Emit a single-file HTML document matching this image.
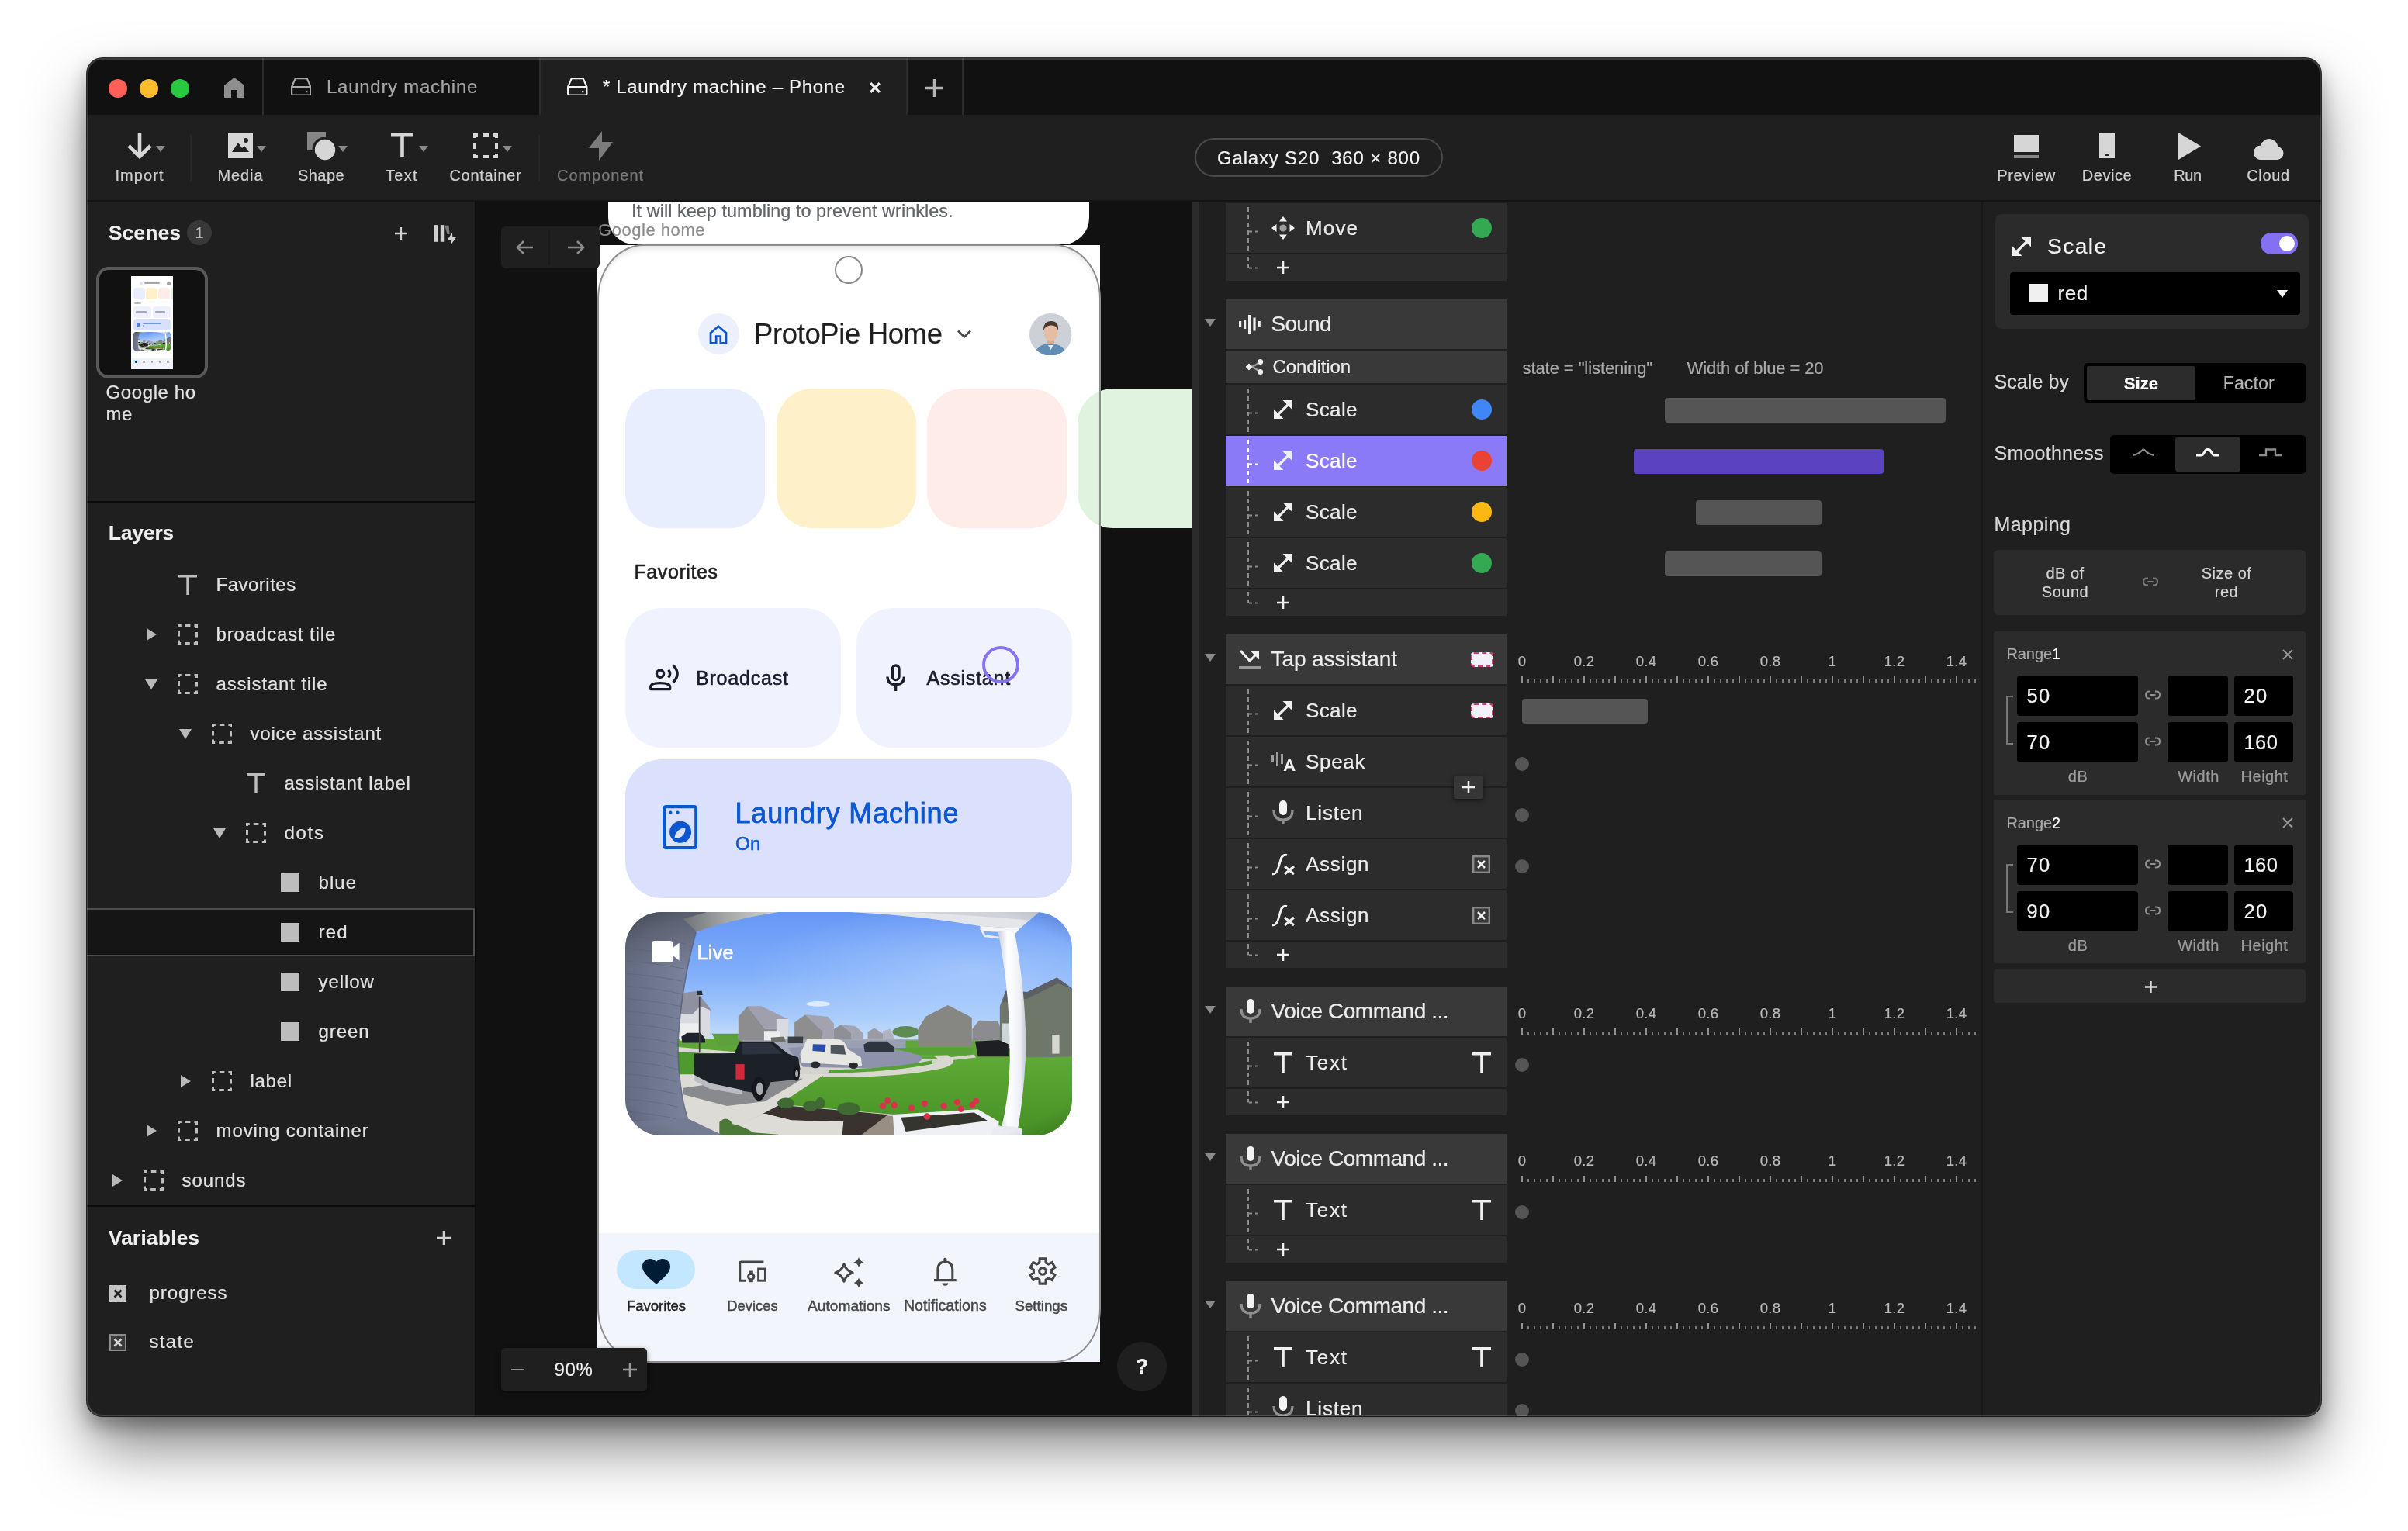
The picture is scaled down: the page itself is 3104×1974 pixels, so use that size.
<!DOCTYPE html>
<html lang="en"><head><meta charset="utf-8"><title>ProtoPie - Laundry machine - Phone</title>
<style>
html,body{margin:0;padding:0;}
body{width:3104px;height:1974px;background:#ffffff;overflow:hidden;position:relative;font-family:"Liberation Sans",sans-serif;}
#win{position:absolute;left:112px;top:75px;width:2880px;height:1751px;border-radius:20px;overflow:hidden;background:#1f1f1f;
box-shadow:0 0 0 1px rgba(0,0,0,.8),0 42px 80px -4px rgba(0,0,0,.5),0 12px 24px rgba(0,0,0,.32);}
#in{position:absolute;left:-112px;top:-75px;width:3104px;height:1974px;will-change:transform;}
#in div,#in svg{position:absolute;box-sizing:border-box;}
#in div{-webkit-text-stroke:0.22px currentColor;}
#edge{position:absolute;left:112px;top:75px;width:2880px;height:1751px;border-radius:20px;box-shadow:inset 0 0 0 2px rgba(255,255,255,.17);pointer-events:none;}
</style></head><body>
<div id="win"><div id="in">
<!-- s1_chrome -->
<div style="left:112px;top:75px;width:2880px;height:73px;background:#111111;"></div>
<div style="left:338px;top:75px;width:2px;height:73px;background:#2b2b2b;"></div>
<div style="left:695px;top:75px;width:2px;height:73px;background:#2b2b2b;"></div>
<div style="left:1168px;top:75px;width:2px;height:73px;background:#2b2b2b;"></div>
<div style="left:1240px;top:75px;width:2px;height:73px;background:#2b2b2b;"></div>
<div style="left:697px;top:75px;width:471px;height:73px;background:#1f1f1f;"></div>
<div style="left:1170px;top:75px;width:70px;height:73px;background:#141414;"></div>
<div style="left:140px;top:102px;width:24px;height:24px;background:#fe5f57;border-radius:50%;"></div>
<div style="left:180px;top:102px;width:24px;height:24px;background:#febc2e;border-radius:50%;"></div>
<div style="left:220px;top:102px;width:24px;height:24px;background:#28c840;border-radius:50%;"></div>
<svg style="left:288px;top:99px;" width="28" height="28" viewBox="0 0 28 28"><path d="M14 1 L27 11 V27 H18 V17 H10 V27 H1 V11 Z" fill="#8e8e8e"/></svg>
<svg style="left:374.9px;top:99.9px;" width="26.5" height="23.6" viewBox="0 0 26.5 23.6"><path d="M5.8 1.1 H20.7 L25.4 12 V20.5 Q25.4 22.5 23.4 22.5 H3.1 Q1.1 22.5 1.1 20.5 V12 Z M1.1 12 H25.4" fill="none" stroke="#a8a8a8" stroke-width="2.2" stroke-linejoin="round"/><rect x="19.2" y="17" width="2.2" height="2.2" fill="#a8a8a8"/></svg>
<div style="top:93px;height:38px;line-height:38px;font-size:24px;color:#a6a6a6;white-space:nowrap;letter-spacing:0.73px;left:421px;">Laundry machine</div>
<svg style="left:731px;top:99.9px;" width="26.5" height="23.6" viewBox="0 0 26.5 23.6"><path d="M5.8 1.1 H20.7 L25.4 12 V20.5 Q25.4 22.5 23.4 22.5 H3.1 Q1.1 22.5 1.1 20.5 V12 Z M1.1 12 H25.4" fill="none" stroke="#f2f2f2" stroke-width="2.2" stroke-linejoin="round"/><rect x="19.2" y="17" width="2.2" height="2.2" fill="#f2f2f2"/></svg>
<div style="top:93px;height:38px;line-height:38px;font-size:24px;color:#f4f4f4;white-space:nowrap;letter-spacing:0.66px;left:777px;">* Laundry machine – Phone</div>
<svg style="left:1120.5px;top:105.5px;" width="14" height="14" viewBox="0 0 14 14"><path d="M1.2 1.2 L12.8 12.8 M12.8 1.2 L1.2 12.8" stroke="#f0f0f0" stroke-width="3.1" fill="none"/></svg>
<svg style="left:1192px;top:101px;" width="25" height="25" viewBox="0 0 25 25"><path d="M12.5 1 V24 M1 12.5 H24" stroke="#b4b4b4" stroke-width="3.4" fill="none"/></svg>
<div style="left:112px;top:148px;width:2880px;height:110px;background:#1f1f1f;"></div>
<div style="left:112px;top:258px;width:2880px;height:2px;background:#141414;"></div>
<div style="left:245px;top:174px;width:2px;height:60px;background:#272727;"></div>
<div style="left:694px;top:174px;width:2px;height:60px;background:#272727;"></div>
<svg style="left:163px;top:170px;" width="34" height="36" viewBox="0 0 34 36"><path d="M17 2 V31 M3 18 L17 32 L31 18" stroke="#d6d6d6" stroke-width="4.6" fill="none"/></svg>
<svg style="left:201px;top:188px;" width="12" height="8" viewBox="0 0 12 8"><path d="M0 0 H12 L6 8 Z" fill="#8a8a8a"/></svg>
<div style="top:210px;height:32px;line-height:32px;font-size:20px;color:#cfcfcf;white-space:nowrap;letter-spacing:1.06px;left:-220px;width:800px;text-align:center;">Import</div>
<svg style="left:294px;top:172px;" width="32" height="32" viewBox="0 0 32 32"><rect width="32" height="32" fill="#d6d6d6"/><path d="M5 24 L13 12 L18 19 L21 16 L27 24 Z" fill="#1f1f1f"/><circle cx="23" cy="9" r="3" fill="#1f1f1f"/></svg>
<svg style="left:331px;top:188px;" width="12" height="8" viewBox="0 0 12 8"><path d="M0 0 H12 L6 8 Z" fill="#8a8a8a"/></svg>
<div style="top:210px;height:32px;line-height:32px;font-size:20px;color:#cfcfcf;white-space:nowrap;letter-spacing:0.88px;left:-90px;width:800px;text-align:center;">Media</div>
<svg style="left:396px;top:170px;" width="40" height="40" viewBox="0 0 40 40"><rect width="24" height="24" fill="#858585"/><circle cx="23" cy="23" r="16.5" fill="#1f1f1f"/><circle cx="23" cy="23" r="13.2" fill="#d6d6d6"/></svg>
<svg style="left:435.5px;top:188px;" width="12" height="8" viewBox="0 0 12 8"><path d="M0 0 H12 L6 8 Z" fill="#8a8a8a"/></svg>
<div style="top:210px;height:32px;line-height:32px;font-size:20px;color:#cfcfcf;white-space:nowrap;letter-spacing:0.47px;left:14px;width:800px;text-align:center;">Shape</div>
<svg style="left:504px;top:171px;" width="29" height="31" viewBox="0 0 29 31"><path d="M0 0 H29 V4.6 H16.8 V31 H12.2 V4.6 H0 Z" fill="#d6d6d6"/></svg>
<svg style="left:539.5px;top:188px;" width="12" height="8" viewBox="0 0 12 8"><path d="M0 0 H12 L6 8 Z" fill="#8a8a8a"/></svg>
<div style="top:210px;height:32px;line-height:32px;font-size:20px;color:#cfcfcf;white-space:nowrap;letter-spacing:1.34px;left:118px;width:800px;text-align:center;">Text</div>
<svg style="left:610px;top:172px;" width="32" height="32" viewBox="0 0 32 32"><rect x="2" y="2" width="28" height="28" fill="none" stroke="#d6d6d6" stroke-width="4" stroke-dasharray="8 6" stroke-dashoffset="4"/></svg>
<svg style="left:647.5px;top:188px;" width="12" height="8" viewBox="0 0 12 8"><path d="M0 0 H12 L6 8 Z" fill="#8a8a8a"/></svg>
<div style="top:210px;height:32px;line-height:32px;font-size:20px;color:#cfcfcf;white-space:nowrap;letter-spacing:0.71px;left:226px;width:800px;text-align:center;">Container</div>
<svg style="left:757px;top:169px;" width="34" height="38" viewBox="0 0 34 38"><path d="M19 0 L2 22 H15 L15 38 L33 14 H19 Z" fill="#7c7c7c"/></svg>
<div style="top:210px;height:32px;line-height:32px;font-size:20px;color:#7a7a7a;white-space:nowrap;letter-spacing:0.95px;left:374px;width:800px;text-align:center;">Component</div>
<div style="left:1540px;top:178px;width:320px;height:50px;border:2px solid #4a4a4a;border-radius:26px;box-sizing:border-box;"></div>
<div style="top:184.5px;height:38px;line-height:38px;font-size:24px;color:#f2f2f2;white-space:nowrap;letter-spacing:0.81px;left:1300px;width:800px;text-align:center;">Galaxy S20  360 × 800</div>
<svg style="left:2596px;top:174px;" width="32" height="30" viewBox="0 0 32 30"><rect width="32" height="22" fill="#d6d6d6"/><rect y="26" width="32" height="4" fill="#858585"/></svg>
<div style="top:210px;height:32px;line-height:32px;font-size:20px;color:#cfcfcf;white-space:nowrap;letter-spacing:0.64px;left:2212px;width:800px;text-align:center;">Preview</div>
<svg style="left:2706px;top:172px;" width="20" height="32" viewBox="0 0 20 32"><rect width="20" height="32" fill="#d6d6d6"/><rect x="7" y="26" width="6" height="3" fill="#1f1f1f"/></svg>
<div style="top:210px;height:32px;line-height:32px;font-size:20px;color:#cfcfcf;white-space:nowrap;letter-spacing:0.57px;left:2316px;width:800px;text-align:center;">Device</div>
<svg style="left:2808px;top:170.5px;" width="29" height="35" viewBox="0 0 29 35"><path d="M0 0 L29 17.5 L0 35 Z" fill="#d6d6d6"/></svg>
<div style="top:210px;height:32px;line-height:32px;font-size:20px;color:#cfcfcf;white-space:nowrap;letter-spacing:-0.35px;left:2420px;width:800px;text-align:center;">Run</div>
<svg style="left:2903px;top:177px;" width="42" height="30" viewBox="0 0 42 30"><path d="M10 29 H33 A8.5 8.5 0 0 0 33.5 12.2 A11.5 11.5 0 0 0 11 10.5 A9.3 9.3 0 0 0 10 29 Z" fill="#d6d6d6"/></svg>
<div style="top:210px;height:32px;line-height:32px;font-size:20px;color:#cfcfcf;white-space:nowrap;letter-spacing:0.69px;left:2524px;width:800px;text-align:center;">Cloud</div>
<!-- s2_left -->
<div style="left:112px;top:260px;width:500px;height:1566px;background:#1f1f1f;"></div>
<div style="left:612px;top:260px;width:2px;height:1566px;background:#0c0c0c;"></div>
<div style="top:279.5px;height:41px;line-height:41px;font-size:26px;color:#f0f0f0;white-space:nowrap;font-weight:700;letter-spacing:0.39px;left:140px;">Scenes</div>
<div style="left:241px;top:284px;width:32px;height:32px;background:#383838;border-radius:50%;"></div>
<div style="top:284px;height:32px;line-height:32px;font-size:20px;color:#b5b5b5;white-space:nowrap;left:-143px;width:800px;text-align:center;">1</div>
<svg style="left:509px;top:293px;" width="16" height="16" viewBox="0 0 16 16"><path d="M8 0 V16 M0 8 H16" stroke="#d0d0d0" stroke-width="2.3" fill="none"/></svg>
<svg style="left:559px;top:289px;" width="30" height="28" viewBox="0 0 30 28"><rect x="0.8" y="1.1" width="4.3" height="21.7" fill="#cfcfcf"/><rect x="8.8" y="1.1" width="4.4" height="21.7" fill="#cfcfcf"/><path d="M14.4 1.8 L19.5 1.8 L20.6 12.9 L17.4 12.9 Z" fill="#7a7a7a"/><path d="M23.9 11.2 L17.4 20.4 L22.2 20.4 L22.3 26.6 L29 16.9 L24.4 16.9 Z" fill="#cfcfcf"/></svg>
<div style="left:124px;top:344px;width:144px;height:144px;background:#111111;border:4px solid #595959;border-radius:16px;"></div>
<div style="left:168.9px;top:355.8px;width:54.2px;height:120.44px;background:#ffffff;border-radius:0px;"></div>
<div style="left:179.69px;top:363.16px;width:4.43px;height:4.43px;background:#dfe6fa;border-radius:3px;"></div>
<div style="left:186.05px;top:364.33px;width:19.82px;height:2.17px;background:#8f9094;border-radius:1px;opacity:.8;"></div>
<div style="left:215.49px;top:363.16px;width:4.52px;height:4.52px;background:#9aa3ae;border-radius:3px;"></div>
<div style="left:171.91px;top:371.27px;width:15.06px;height:15.06px;background:#e8eefd;border-radius:4px;"></div>
<div style="left:188.14px;top:371.27px;width:15.06px;height:15.06px;background:#fef0c8;border-radius:4px;"></div>
<div style="left:204.36px;top:371.27px;width:15.06px;height:15.06px;background:#feece8;border-radius:4px;"></div>
<div style="left:220.67px;top:371.27px;width:2.43px;height:15.06px;background:#e0f3de;border-radius:0px;"></div>
<div style="left:172.91px;top:390.26px;width:8.7px;height:1.51px;background:#b9babd;border-radius:1px;"></div>
<div style="left:171.91px;top:394.94px;width:23.25px;height:15.06px;background:#eef1fd;border-radius:4px;"></div>
<div style="left:196.84px;top:394.94px;width:23.17px;height:15.06px;background:#eef1fd;border-radius:4px;"></div>
<div style="left:174.59px;top:401.3px;width:14.55px;height:2.34px;background:#8e909c;border-radius:1px;opacity:.75;"></div>
<div style="left:200.1px;top:401.3px;width:13.13px;height:2.34px;background:#8e909c;border-radius:1px;opacity:.75;"></div>
<div style="left:171.91px;top:411.25px;width:48.09px;height:14.89px;background:#d9e0fc;border-radius:4px;"></div>
<div style="left:175.93px;top:416.19px;width:3.76px;height:4.77px;background:#4d7fd8;border-radius:1px;"></div>
<div style="left:183.79px;top:415.85px;width:23.92px;height:2.34px;background:#6f97e0;border-radius:1px;"></div>
<div style="left:183.79px;top:419.37px;width:2.68px;height:1.67px;background:#7fa2e4;border-radius:1px;"></div>
<svg style="left:171.91px;top:427.73px;" width="48.18" height="24.09" viewBox="25 25 2350 1175" preserveAspectRatio="none"><defs><linearGradient id="tsky" x1="0" y1="0" x2="0" y2="1"><stop offset="0" stop-color="#6697f6"/><stop offset="0.45" stop-color="#80aefa"/><stop offset="0.8" stop-color="#a9ccfb"/><stop offset="1" stop-color="#d2e3fa"/></linearGradient><radialGradient id="tglow" cx="0.78" cy="0.45" r="0.5"><stop offset="0" stop-color="#d9ecff" stop-opacity="0.38"/><stop offset="1" stop-color="#d9ecff" stop-opacity="0"/></radialGradient><linearGradient id="tlawn" x1="0" y1="0" x2="0" y2="1"><stop offset="0" stop-color="#5faa36"/><stop offset="1" stop-color="#468f25"/></linearGradient><linearGradient id="tside" x1="0" y1="0" x2="1" y2="0"><stop offset="0" stop-color="#646c82"/><stop offset="0.55" stop-color="#79819a"/><stop offset="1" stop-color="#80889f"/></linearGradient><linearGradient id="tpil" x1="0" y1="0" x2="1" y2="0"><stop offset="0" stop-color="#c9ced9"/><stop offset="0.35" stop-color="#ffffff"/><stop offset="0.8" stop-color="#eef0f5"/><stop offset="1" stop-color="#c4c9d4"/></linearGradient><radialGradient id="tvig" cx="0.5" cy="0.5" r="0.75"><stop offset="0.8" stop-color="#000" stop-opacity="0"/><stop offset="1" stop-color="#000" stop-opacity="0.22"/></radialGradient><clipPath id="tcamclip"><rect x="25" y="25" width="2350" height="1175" rx="190" ry="190"/></clipPath></defs><g clip-path="url(#tcamclip)"><rect x="25" y="25" width="2350" height="700" fill="url(#tsky)"/><rect x="25" y="25" width="2350" height="700" fill="url(#tglow)"/><ellipse cx="1040" cy="508" rx="62" ry="14" fill="#e8f1fd" opacity="0.85"/><rect x="25" y="690" width="2350" height="520" fill="#d4d4cf"/><path d="M300 690 H2375 V800 H300 Z" fill="#a4a9b9"/><path d="M1440 700 H2375 V800 H1440 Z" fill="#5fa53a"/><path d="M300 690 H640 V800 H300 Z" fill="#5fa53a"/><ellipse cx="1500" cy="655" rx="70" ry="30" fill="#5f8a52"/><path d="M880 740 Q1250 700 1560 770 Q1620 800 1540 825 Q1380 850 1240 845 L960 840 Z" fill="#8e93ab"/><path d="M1100 700 H1500 V740 H1100 Z" fill="#9aa0b4"/><path d="M310 470 L390 440 L470 540 L470 690 L310 700 Z" fill="#d9dbe0"/><path d="M300 455 L400 440 L480 545 L420 520 L380 560 L300 560 Z" fill="#8f91a0"/><path d="M310 610 H410 V700 H310 Z" fill="#eeeeee"/><path d="M620 575 L668 520 L760 640 L840 640 V700 H620 Z" fill="#8d8d8f"/><path d="M668 520 L740 520 L885 590 L885 680 L840 690 V640 L760 640 Z" fill="#a09fae"/><path d="M820 588 H885 V690 H820 Z" fill="#d8dbe2"/><path d="M755 650 H838 V700 H755 Z" fill="#eceef0"/><path d="M915 605 L972 565 L1060 650 V695 H915 Z" fill="#8e8e8f"/><path d="M972 565 L1090 575 L1122 610 V690 H1060 V650 Z" fill="#a3a2ae"/><path d="M1122 640 L1160 618 L1215 660 V695 H1122 Z" fill="#8f9096"/><path d="M1160 618 L1235 625 L1275 660 V690 H1215 V660 Z" fill="#a3a4b2"/><path d="M1300 655 L1335 635 L1380 665 V695 H1300 Z" fill="#9a9ba3"/><path d="M1380 650 L1420 640 L1440 690 H1380 Z" fill="#b0b2bf"/><path d="M1565 640 L1605 575 L1722 515 L1848 580 V735 H1565 Z" fill="#868682"/><path d="M1850 640 L1885 595 L1985 598 L2000 640 V700 H1850 Z" fill="#8b8b90"/><path d="M1995 520 L2025 440 L2140 445 L2295 370 L2380 430 V790 H2140 L1995 740 Z" fill="#6f766a"/><path d="M2025 440 L2140 445 L2295 370 L2380 430 L2300 400 L2140 480 L2010 500 Z" fill="#5c5f66"/><path d="M2005 610 H2050 V740 H2005 Z" fill="#cfd6d8"/><rect x="2270" y="670" width="38" height="100" fill="#d7d7d2"/><path d="M1060 885 L1640 850 Q1730 830 1730 800 L2380 785 V1210 H2150 L1960 1135 L1440 1090 L830 1035 Z" fill="url(#tlawn)"/><path d="M1440 740 H1860 L1840 775 H1560 Z" fill="#58a038"/><path d="M1100 855 Q1400 850 1640 805 L1640 825 Q1400 870 1090 872 Z" fill="#57a035"/><path d="M300 760 L600 775 L395 880 H300 Z" fill="#4f9a2e"/><path d="M480 665 H620 V720 L520 735 Z" fill="#5da03c"/><path d="M1075 878 Q1420 872 1640 825 Q1700 805 1640 780 L1720 778 Q1790 815 1700 845 Q1450 900 1060 892 Z" fill="#d9d8cf"/><path d="M1720 790 L1860 775 L1870 790 L1735 805 Z" fill="#d6d5cd"/><path d="M300 735 L600 760 L600 775 L300 760 Z" fill="#d8d7d0"/><path d="M310 880 L1075 878 L830 1040 L640 1140 L1170 1125 L1165 1210 H560 L350 1110 Z" fill="#dcdbd6"/><path d="M330 950 L470 930 L960 900 L760 1020 L560 1045 L330 985 Z" fill="#6d6f74" opacity="0.75"/><path d="M320 680 L350 660 L420 660 L445 690 V712 H325 Z" fill="#1f232c"/><path d="M1278 722 L1310 705 L1400 705 L1438 735 V762 H1285 Z" fill="#2f3540"/><path d="M1865 705 L1990 698 L2040 720 V785 H1880 Z" fill="#1d1f22"/><path d="M880 680 H960 V715 H880 Z" fill="#3a3d42"/><path d="M790 685 L860 680 L870 710 H795 Z" fill="#6d7068"/><path d="M978 700 Q980 690 995 690 L1150 695 Q1180 700 1195 745 L1265 790 L1270 835 L950 815 L945 770 Z" fill="#e6e6e2"/><path d="M1012 720 L1080 722 L1075 760 L1010 755 Z" fill="#2b4fa8"/><path d="M1105 725 L1175 728 L1185 775 L1105 770 Z" fill="#50545c"/><ellipse cx="1025" cy="828" rx="26" ry="18" fill="#2a2a2c"/><ellipse cx="1225" cy="832" rx="24" ry="17" fill="#2a2a2c"/><path d="M388 770 L600 768 L625 705 L800 705 L880 770 L935 790 L945 850 L930 905 L790 920 L760 985 L640 965 L470 940 L385 895 Z" fill="#1c2027"/><path d="M640 715 L790 715 L850 770 L640 775 Z" fill="#2c3340"/><path d="M606 825 H652 V905 H606 Z" fill="#d3273a"/><path d="M385 880 L470 925 L640 960 L640 985 L470 955 L385 910 Z" fill="#b9bcc0"/><ellipse cx="728" cy="955" rx="36" ry="62" fill="#15171b"/><ellipse cx="732" cy="955" rx="18" ry="34" fill="#a8abb0"/><ellipse cx="925" cy="875" rx="18" ry="38" fill="#15171b"/><ellipse cx="927" cy="875" rx="8" ry="19" fill="#a8abb0"/><rect x="412" y="470" width="7" height="295" fill="#3a3d40"/><path d="M405 440 L428 440 L432 462 L400 462 Z" fill="#2c2e31"/><path d="M750 1085 L835 1040 L1400 1090 L1430 1135 L1250 1210 H1160 L1172 1128 L900 1120 Z" fill="#3a322f"/><path d="M1250 1210 L1400 1095 L1440 1100 L1440 1210 Z" fill="#988f82"/><path d="M640 1140 L760 1085 L900 1120 L1172 1128 L1165 1210 H640 Z" fill="#dedcd6"/><path d="M520 1130 Q560 1090 590 1140 Q640 1150 700 1185 L830 1195 V1210 H520 Z" fill="#4a7a35"/><ellipse cx="870" cy="1030" rx="45" ry="28" fill="#3f6a33"/><ellipse cx="1000" cy="1045" rx="40" ry="28" fill="#3f6a33"/><ellipse cx="1200" cy="1060" rx="60" ry="34" fill="#3f6a33"/><ellipse cx="1050" cy="1030" rx="25" ry="30" fill="#3f6a33"/><path d="M1432 1090 L1880 1062 L1990 1128 L1985 1210 H1440 Z" fill="#eef0f3"/><path d="M1475 1105 L1860 1080 L1930 1122 L1500 1180 Z" fill="#35352f"/><circle cx="1405" cy="1018" r="17" fill="#d8334d"/><circle cx="1440" cy="1040" r="17" fill="#d8334d"/><circle cx="1530" cy="1055" r="17" fill="#d8334d"/><circle cx="1600" cy="1032" r="17" fill="#d8334d"/><circle cx="1612" cy="1100" r="17" fill="#d8334d"/><circle cx="1700" cy="1045" r="17" fill="#d8334d"/><circle cx="1770" cy="1025" r="17" fill="#d8334d"/><circle cx="1850" cy="1040" r="17" fill="#d8334d"/><circle cx="1870" cy="1020" r="17" fill="#d8334d"/><circle cx="1790" cy="1060" r="17" fill="#d8334d"/><circle cx="1380" cy="1045" r="17" fill="#d8334d"/><path d="M25 25 H450 L395 130 Q320 400 300 700 Q300 950 350 1110 L560 1210 H25 Z" fill="url(#tside)"/><linearGradient id="tsidetop" x1="0" y1="0" x2="0" y2="1"><stop offset="0" stop-color="#4e525c" stop-opacity="0.75"/><stop offset="1" stop-color="#4e525c" stop-opacity="0"/></linearGradient><path d="M25 25 H450 L395 130 Q360 250 345 330 H25 Z" fill="url(#tsidetop)"/><path d="M25 150 Q200 164 345 192" stroke="#59617a" stroke-width="4" fill="none" opacity="0.6"/><path d="M25 216 Q200 230 340 258" stroke="#59617a" stroke-width="4" fill="none" opacity="0.6"/><path d="M25 282 Q200 296 335 324" stroke="#59617a" stroke-width="4" fill="none" opacity="0.6"/><path d="M25 348 Q200 362 330 390" stroke="#59617a" stroke-width="4" fill="none" opacity="0.6"/><path d="M25 414 Q200 428 325 456" stroke="#59617a" stroke-width="4" fill="none" opacity="0.6"/><path d="M25 480 Q200 494 320 522" stroke="#59617a" stroke-width="4" fill="none" opacity="0.6"/><path d="M25 546 Q200 560 315 588" stroke="#59617a" stroke-width="4" fill="none" opacity="0.6"/><path d="M25 612 Q200 626 310 654" stroke="#59617a" stroke-width="4" fill="none" opacity="0.6"/><path d="M25 678 Q200 692 305 720" stroke="#59617a" stroke-width="4" fill="none" opacity="0.6"/><path d="M25 744 Q200 758 300 786" stroke="#59617a" stroke-width="4" fill="none" opacity="0.6"/><path d="M25 810 Q200 824 300 852" stroke="#59617a" stroke-width="4" fill="none" opacity="0.6"/><path d="M25 876 Q200 890 300 918" stroke="#59617a" stroke-width="4" fill="none" opacity="0.6"/><path d="M25 942 Q200 956 300 984" stroke="#59617a" stroke-width="4" fill="none" opacity="0.6"/><path d="M25 1008 Q200 1022 300 1050" stroke="#59617a" stroke-width="4" fill="none" opacity="0.6"/><path d="M25 1074 Q200 1088 300 1116" stroke="#59617a" stroke-width="4" fill="none" opacity="0.6"/><path d="M25 1140 Q200 1154 300 1182" stroke="#59617a" stroke-width="4" fill="none" opacity="0.6"/><path d="M397 130 Q322 400 302 700 Q302 950 352 1110" stroke="#565d72" stroke-width="7" fill="none" opacity="0.8"/><path d="M350 1110 L560 1210 H25 V1130 Z" fill="#747c93"/><linearGradient id="troofl" x1="0" y1="0" x2="1" y2="0"><stop offset="0" stop-color="#6f7378"/><stop offset="0.45" stop-color="#a4a6a6"/><stop offset="1" stop-color="#d6d6d2"/></linearGradient><path d="M330 62 L455 25 H830 Q600 60 400 128 Z" fill="url(#troofl)"/><path d="M1200 25 H2200 L2100 112 L1890 98 Q1560 42 1200 25 Z" fill="#e3e5e8"/><path d="M1500 25 H2200 L2150 68 Q1850 40 1500 25 Z" fill="#cfd2d8"/><path d="M1890 98 L2100 112 L2080 135 L1900 125 Z" fill="#f4f5f7"/><path d="M1895 110 L1915 150 L1990 160" stroke="#e9ebef" stroke-width="12" fill="none"/><path d="M1985 125 L2072 125 Q2140 500 2130 800 Q2120 1000 2085 1195 L1995 1195 Q2045 1000 2048 800 Q2050 450 1985 125 Z" fill="url(#tpil)"/><path d="M1960 1160 Q2040 1140 2110 1165 L2110 1210 H1950 Z" fill="#e9ebf0"/><rect x="25" y="25" width="2350" height="1175" fill="url(#tvig)"/></g></svg>
<div style="left:168.9px;top:462.36px;width:54.2px;height:13.88px;background:#f1f3fb;border-radius:0px;"></div>
<div style="left:171.07px;top:464.2px;width:8.36px;height:4.18px;background:#c2e7ff;border-radius:2px;"></div>
<div style="left:173.92px;top:465.2px;width:2.68px;height:2.51px;background:#0a2440;border-radius:1.5px;"></div>
<div style="left:184.29px;top:465.37px;width:2.68px;height:2.34px;background:#a4a6a8;border-radius:1px;"></div>
<div style="left:194.66px;top:465.37px;width:2.68px;height:2.34px;background:#a4a6a8;border-radius:1px;"></div>
<div style="left:205.03px;top:465.37px;width:2.68px;height:2.34px;background:#a4a6a8;border-radius:1px;"></div>
<div style="left:215.49px;top:465.37px;width:2.68px;height:2.34px;background:#a4a6a8;border-radius:1px;"></div>
<div style="left:172.08px;top:469.64px;width:6.36px;height:1.17px;background:#b4b5b8;border-radius:0.5px;"></div>
<div style="left:182.91px;top:469.64px;width:5.44px;height:1.17px;background:#b4b5b8;border-radius:0.5px;"></div>
<div style="left:191.57px;top:469.64px;width:8.87px;height:1.17px;background:#b4b5b8;border-radius:0.5px;"></div>
<div style="left:201.94px;top:469.64px;width:8.87px;height:1.17px;background:#b4b5b8;border-radius:0.5px;"></div>
<div style="left:213.9px;top:469.64px;width:5.69px;height:1.17px;background:#b4b5b8;border-radius:0.5px;"></div>
<div style="top:487px;height:38px;line-height:38px;font-size:24px;color:#e2e2e2;white-space:nowrap;letter-spacing:0.61px;left:136.5px;">Google ho</div>
<div style="top:514.5px;height:38px;line-height:38px;font-size:24px;color:#e2e2e2;white-space:nowrap;letter-spacing:0.6px;left:136.5px;">me</div>
<div style="left:112px;top:646px;width:500px;height:2px;background:#0a0a0a;"></div>
<div style="top:667px;height:41px;line-height:41px;font-size:26px;color:#f0f0f0;white-space:nowrap;font-weight:700;letter-spacing:0.03px;left:140px;">Layers</div>
<svg style="left:230px;top:740.5px;" width="24" height="26" viewBox="0 0 24 26"><path d="M0 0 H24 V3.4 H13.7 V26 H10.3 V3.4 H0 Z" fill="#bcbcbc"/></svg>
<div style="top:735px;height:38px;line-height:38px;font-size:24px;color:#e2e2e2;white-space:nowrap;letter-spacing:0.5px;left:278.5px;">Favorites</div>
<svg style="left:189px;top:809.5px;" width="13" height="16" viewBox="0 0 13 16"><path d="M0 0 L13 8 L0 16 Z" fill="#b8b8b8"/></svg>
<svg style="left:229px;top:804.5px;" width="26" height="26" viewBox="0 0 26 26"><rect x="1.5" y="1.5" width="23" height="23" fill="none" stroke="#bcbcbc" stroke-width="3" stroke-dasharray="6.6 5" stroke-dashoffset="3.3"/></svg>
<div style="top:799px;height:38px;line-height:38px;font-size:24px;color:#e2e2e2;white-space:nowrap;letter-spacing:0.85px;left:278.5px;">broadcast tile</div>
<svg style="left:187px;top:875.5px;" width="16" height="13" viewBox="0 0 16 13"><path d="M0 0 H16 L8 13 Z" fill="#b8b8b8"/></svg>
<svg style="left:229px;top:868.5px;" width="26" height="26" viewBox="0 0 26 26"><rect x="1.5" y="1.5" width="23" height="23" fill="none" stroke="#bcbcbc" stroke-width="3" stroke-dasharray="6.6 5" stroke-dashoffset="3.3"/></svg>
<div style="top:863px;height:38px;line-height:38px;font-size:24px;color:#e2e2e2;white-space:nowrap;letter-spacing:0.84px;left:278.5px;">assistant tile</div>
<svg style="left:231px;top:939.5px;" width="16" height="13" viewBox="0 0 16 13"><path d="M0 0 H16 L8 13 Z" fill="#b8b8b8"/></svg>
<svg style="left:273px;top:932.5px;" width="26" height="26" viewBox="0 0 26 26"><rect x="1.5" y="1.5" width="23" height="23" fill="none" stroke="#bcbcbc" stroke-width="3" stroke-dasharray="6.6 5" stroke-dashoffset="3.3"/></svg>
<div style="top:927px;height:38px;line-height:38px;font-size:24px;color:#e2e2e2;white-space:nowrap;letter-spacing:0.81px;left:322.5px;">voice assistant</div>
<svg style="left:318px;top:996.5px;" width="24" height="26" viewBox="0 0 24 26"><path d="M0 0 H24 V3.4 H13.7 V26 H10.3 V3.4 H0 Z" fill="#bcbcbc"/></svg>
<div style="top:991px;height:38px;line-height:38px;font-size:24px;color:#e2e2e2;white-space:nowrap;letter-spacing:0.74px;left:366.5px;">assistant label</div>
<svg style="left:275px;top:1067.5px;" width="16" height="13" viewBox="0 0 16 13"><path d="M0 0 H16 L8 13 Z" fill="#b8b8b8"/></svg>
<svg style="left:317px;top:1060.5px;" width="26" height="26" viewBox="0 0 26 26"><rect x="1.5" y="1.5" width="23" height="23" fill="none" stroke="#bcbcbc" stroke-width="3" stroke-dasharray="6.6 5" stroke-dashoffset="3.3"/></svg>
<div style="top:1055px;height:38px;line-height:38px;font-size:24px;color:#e2e2e2;white-space:nowrap;letter-spacing:1.71px;left:366.5px;">dots</div>
<div style="left:361.5px;top:1125.5px;width:24px;height:24px;background:#bdbdbd;"></div>
<div style="top:1119px;height:38px;line-height:38px;font-size:24px;color:#e2e2e2;white-space:nowrap;letter-spacing:1.04px;left:410.5px;">blue</div>
<div style="left:112px;top:1171px;width:500px;height:62px;background:#151515;border:2px solid #4c4c4c;border-left:none;"></div>
<div style="left:361.5px;top:1189.5px;width:24px;height:24px;background:#bdbdbd;"></div>
<div style="top:1183px;height:38px;line-height:38px;font-size:24px;color:#e2e2e2;white-space:nowrap;letter-spacing:1.26px;left:410.5px;">red</div>
<div style="left:361.5px;top:1253.5px;width:24px;height:24px;background:#bdbdbd;"></div>
<div style="top:1247px;height:38px;line-height:38px;font-size:24px;color:#e2e2e2;white-space:nowrap;letter-spacing:0.94px;left:410.5px;">yellow</div>
<div style="left:361.5px;top:1317.5px;width:24px;height:24px;background:#bdbdbd;"></div>
<div style="top:1311px;height:38px;line-height:38px;font-size:24px;color:#e2e2e2;white-space:nowrap;letter-spacing:0.93px;left:410.5px;">green</div>
<svg style="left:233px;top:1385.5px;" width="13" height="16" viewBox="0 0 13 16"><path d="M0 0 L13 8 L0 16 Z" fill="#b8b8b8"/></svg>
<svg style="left:273px;top:1380.5px;" width="26" height="26" viewBox="0 0 26 26"><rect x="1.5" y="1.5" width="23" height="23" fill="none" stroke="#bcbcbc" stroke-width="3" stroke-dasharray="6.6 5" stroke-dashoffset="3.3"/></svg>
<div style="top:1375px;height:38px;line-height:38px;font-size:24px;color:#e2e2e2;white-space:nowrap;letter-spacing:0.7px;left:322.5px;">label</div>
<svg style="left:189px;top:1449.5px;" width="13" height="16" viewBox="0 0 13 16"><path d="M0 0 L13 8 L0 16 Z" fill="#b8b8b8"/></svg>
<svg style="left:229px;top:1444.5px;" width="26" height="26" viewBox="0 0 26 26"><rect x="1.5" y="1.5" width="23" height="23" fill="none" stroke="#bcbcbc" stroke-width="3" stroke-dasharray="6.6 5" stroke-dashoffset="3.3"/></svg>
<div style="top:1439px;height:38px;line-height:38px;font-size:24px;color:#e2e2e2;white-space:nowrap;letter-spacing:0.9px;left:278.5px;">moving container</div>
<svg style="left:145px;top:1513.5px;" width="13" height="16" viewBox="0 0 13 16"><path d="M0 0 L13 8 L0 16 Z" fill="#b8b8b8"/></svg>
<svg style="left:185px;top:1508.5px;" width="26" height="26" viewBox="0 0 26 26"><rect x="1.5" y="1.5" width="23" height="23" fill="none" stroke="#bcbcbc" stroke-width="3" stroke-dasharray="6.6 5" stroke-dashoffset="3.3"/></svg>
<div style="top:1503px;height:38px;line-height:38px;font-size:24px;color:#e2e2e2;white-space:nowrap;letter-spacing:0.92px;left:234.5px;">sounds</div>
<div style="left:112px;top:1554px;width:500px;height:2px;background:#0a0a0a;"></div>
<div style="top:1575.5px;height:41px;line-height:41px;font-size:26px;color:#f0f0f0;white-space:nowrap;font-weight:700;letter-spacing:0.35px;left:140px;">Variables</div>
<svg style="left:563px;top:1587px;" width="18" height="18" viewBox="0 0 18 18"><path d="M9 0 V18 M0 9 H18" stroke="#d0d0d0" stroke-width="2.6" fill="none"/></svg>
<svg style="left:140.5px;top:1657px;" width="22" height="22" viewBox="0 0 22 22"><rect width="22" height="22" fill="#c4c4c4"/><path d="M6.5 6.5 L15.5 15.5 M15.5 6.5 L6.5 15.5" stroke="#1f1f1f" stroke-width="2.6"/></svg>
<div style="top:1648px;height:38px;line-height:38px;font-size:24px;color:#e2e2e2;white-space:nowrap;letter-spacing:0.95px;left:192.4px;">progress</div>
<svg style="left:140.5px;top:1720px;" width="22" height="22" viewBox="0 0 22 22"><rect x="1" y="1" width="20" height="20" fill="#3a3a3a" stroke="#8c8c8c" stroke-width="2"/><path d="M6.5 6.5 L15.5 15.5 M15.5 6.5 L6.5 15.5" stroke="#d8d8d8" stroke-width="2.6"/></svg>
<div style="top:1711px;height:38px;line-height:38px;font-size:24px;color:#e2e2e2;white-space:nowrap;letter-spacing:1.37px;left:192.4px;">state</div>
<!-- s3_canvas -->
<div style="left:614px;top:260px;width:922px;height:1566px;background:#111111;"></div>
<div style="left:784px;top:260px;width:620px;height:55px;background:#ffffff;border-radius:0 0 34px 34px;"></div>
<div style="top:253.5px;height:37px;line-height:37px;font-size:23.4px;color:#5f6368;white-space:nowrap;letter-spacing:0.06px;left:814px;">It will keep tumbling to prevent wrinkles.</div>
<div style="left:770px;top:316px;width:648px;height:1440px;background:#ffffff;"></div>
<div style="left:1075.5px;top:330px;width:36px;height:36px;background:#ffffff;border:2px solid #8a8a8a;border-radius:50%;"></div>
<div style="left:899.5px;top:403.8px;width:53px;height:53px;background:#ecf0fc;border-radius:50%;"></div>
<svg style="left:914px;top:418.5px;" width="24" height="25" viewBox="0 0 24 25"><path d="M2 10.2 L12 1.8 L22 10.2 V23.4 H14.8 V14.6 H9.2 V23.4 H2 Z" fill="none" stroke="#0b57d0" stroke-width="2.7" stroke-linejoin="miter"/></svg>
<div style="top:401.5px;height:58px;line-height:58px;font-size:36.5px;color:#1f1f1f;white-space:nowrap;letter-spacing:-0.38px;left:972px;">ProtoPie Home</div>
<svg style="left:1233px;top:424px;" width="20" height="13" viewBox="0 0 20 13"><path d="M2 2.5 L10 10.5 L18 2.5" fill="none" stroke="#444746" stroke-width="2.6"/></svg>
<svg style="left:1327.4px;top:403.6px;" width="54.5" height="54.5" viewBox="0 0 54.5 54.5"><defs><clipPath id="avc"><circle cx="27.25" cy="27.25" r="27.25"/></clipPath></defs><g clip-path="url(#avc)"><rect width="55" height="55" fill="#cdd0d6"/><ellipse cx="27" cy="53" rx="20" ry="14" fill="#5f8db5"/><rect x="23" y="30" width="9" height="10" fill="#d9a98f"/><ellipse cx="27.5" cy="24.5" rx="9" ry="11.5" fill="#e5bca4"/><path d="M18 22 Q18 10 28 10 Q38 10 37 22 Q35 15 28 15.5 Q21 15 18 22 Z" fill="#4a3829"/><path d="M24 41 L27.5 47 L31 41 Z" fill="#e9eef2"/></g></svg>
<div style="left:806px;top:501px;width:180px;height:180px;background:#e8eefd;border-radius:46px;"></div>
<div style="left:1000.5px;top:501px;width:180px;height:180px;background:#fef0c8;border-radius:46px;"></div>
<div style="left:1194.5px;top:501px;width:180px;height:180px;background:#feece8;border-radius:46px;"></div>
<div style="left:1389px;top:501px;width:147px;height:180px;background:#e0f3de;border-radius:46px 0 0 46px;"></div>
<div style="top:717px;height:40px;line-height:40px;font-size:25px;color:#1f1f1f;white-space:nowrap;letter-spacing:0.59px;left:817.5px;-webkit-text-stroke:0.6px #1f1f1f;">Favorites</div>
<div style="left:806px;top:784px;width:278px;height:180px;background:#f0f3fe;border-radius:47px;"></div>
<div style="left:1104px;top:784px;width:277.5px;height:180px;background:#f0f3fe;border-radius:47px;"></div>
<svg style="left:837px;top:856px;" width="42" height="36" viewBox="0 0 42 36"><g fill="none" stroke="#1b1c2b" stroke-width="3.4"><circle cx="14" cy="12.6" r="4.6"/><path d="M1.8 32.6 V29.5 Q1.8 24.6 14 24.6 Q26.6 24.6 26.6 29.5 V32.6 Z" stroke-linejoin="round"/><path d="M24.6 7.6 Q28.6 12.6 24.6 17.6"/><path d="M30.6 1.6 Q41.5 12.6 30.6 24"/></g></svg>
<div style="top:854px;height:40px;line-height:40px;font-size:25px;color:#1b1c2b;white-space:nowrap;letter-spacing:0.8px;left:897px;-webkit-text-stroke:0.6px #1b1c2b;">Broadcast</div>
<svg style="left:1142px;top:855.5px;" width="26" height="36" viewBox="0 0 26 36"><g fill="none" stroke="#1b1c2b" stroke-width="3.3"><rect x="8.4" y="2" width="8.6" height="18.6" rx="4.3"/><path d="M2 16.5 Q2 26.6 12.7 26.6 Q23.4 26.6 23.4 16.5"/><path d="M12.7 26.6 V35"/></g></svg>
<div style="top:854px;height:40px;line-height:40px;font-size:25px;color:#1b1c2b;white-space:nowrap;letter-spacing:0.78px;left:1194.5px;-webkit-text-stroke:0.6px #1b1c2b;">Assistant</div>
<div style="left:1266px;top:833.3px;width:48px;height:48px;border:4px solid #8672f3;border-radius:50%;"></div>
<div style="left:806px;top:979px;width:575.5px;height:178.6px;background:#dbe1fc;border-radius:47px;"></div>
<svg style="left:854px;top:1038.3px;" width="45.4" height="57.2" viewBox="0 0 45.4 57.2"><rect x="2.1" y="2.1" width="41.2" height="53" rx="2.5" fill="none" stroke="#0b57d0" stroke-width="4.2"/><circle cx="10.4" cy="9.7" r="2.1" fill="#0b57d0"/><circle cx="19.6" cy="9.7" r="2.1" fill="#0b57d0"/><circle cx="23.1" cy="34.8" r="14" fill="#0b57d0"/><path d="M15.5 41.5 Q17 31 29.5 29 Q30 40.5 19.5 42.8 Q17.5 43 15.5 41.5 Z" fill="#dbe1fc"/></svg>
<div style="top:1020px;height:57px;line-height:57px;font-size:36px;color:#0b57d0;white-space:nowrap;letter-spacing:0.84px;left:947.5px;-webkit-text-stroke:0.8px #0b57d0;">Laundry Machine</div>
<div style="top:1068.5px;height:38px;line-height:38px;font-size:24px;color:#0b57d0;white-space:nowrap;letter-spacing:0.3px;left:948px;-webkit-text-stroke:0.5px #0b57d0;">On</div>
<svg style="left:806px;top:1176px;" width="576" height="288" viewBox="25 25 2350 1175" preserveAspectRatio="none"><defs><linearGradient id="csky" x1="0" y1="0" x2="0" y2="1"><stop offset="0" stop-color="#6697f6"/><stop offset="0.45" stop-color="#80aefa"/><stop offset="0.8" stop-color="#a9ccfb"/><stop offset="1" stop-color="#d2e3fa"/></linearGradient><radialGradient id="cglow" cx="0.78" cy="0.45" r="0.5"><stop offset="0" stop-color="#d9ecff" stop-opacity="0.38"/><stop offset="1" stop-color="#d9ecff" stop-opacity="0"/></radialGradient><linearGradient id="clawn" x1="0" y1="0" x2="0" y2="1"><stop offset="0" stop-color="#5faa36"/><stop offset="1" stop-color="#468f25"/></linearGradient><linearGradient id="cside" x1="0" y1="0" x2="1" y2="0"><stop offset="0" stop-color="#646c82"/><stop offset="0.55" stop-color="#79819a"/><stop offset="1" stop-color="#80889f"/></linearGradient><linearGradient id="cpil" x1="0" y1="0" x2="1" y2="0"><stop offset="0" stop-color="#c9ced9"/><stop offset="0.35" stop-color="#ffffff"/><stop offset="0.8" stop-color="#eef0f5"/><stop offset="1" stop-color="#c4c9d4"/></linearGradient><radialGradient id="cvig" cx="0.5" cy="0.5" r="0.75"><stop offset="0.8" stop-color="#000" stop-opacity="0"/><stop offset="1" stop-color="#000" stop-opacity="0.22"/></radialGradient><clipPath id="ccamclip"><rect x="25" y="25" width="2350" height="1175" rx="190" ry="190"/></clipPath></defs><g clip-path="url(#ccamclip)"><rect x="25" y="25" width="2350" height="700" fill="url(#csky)"/><rect x="25" y="25" width="2350" height="700" fill="url(#cglow)"/><ellipse cx="1040" cy="508" rx="62" ry="14" fill="#e8f1fd" opacity="0.85"/><rect x="25" y="690" width="2350" height="520" fill="#d4d4cf"/><path d="M300 690 H2375 V800 H300 Z" fill="#a4a9b9"/><path d="M1440 700 H2375 V800 H1440 Z" fill="#5fa53a"/><path d="M300 690 H640 V800 H300 Z" fill="#5fa53a"/><ellipse cx="1500" cy="655" rx="70" ry="30" fill="#5f8a52"/><path d="M880 740 Q1250 700 1560 770 Q1620 800 1540 825 Q1380 850 1240 845 L960 840 Z" fill="#8e93ab"/><path d="M1100 700 H1500 V740 H1100 Z" fill="#9aa0b4"/><path d="M310 470 L390 440 L470 540 L470 690 L310 700 Z" fill="#d9dbe0"/><path d="M300 455 L400 440 L480 545 L420 520 L380 560 L300 560 Z" fill="#8f91a0"/><path d="M310 610 H410 V700 H310 Z" fill="#eeeeee"/><path d="M620 575 L668 520 L760 640 L840 640 V700 H620 Z" fill="#8d8d8f"/><path d="M668 520 L740 520 L885 590 L885 680 L840 690 V640 L760 640 Z" fill="#a09fae"/><path d="M820 588 H885 V690 H820 Z" fill="#d8dbe2"/><path d="M755 650 H838 V700 H755 Z" fill="#eceef0"/><path d="M915 605 L972 565 L1060 650 V695 H915 Z" fill="#8e8e8f"/><path d="M972 565 L1090 575 L1122 610 V690 H1060 V650 Z" fill="#a3a2ae"/><path d="M1122 640 L1160 618 L1215 660 V695 H1122 Z" fill="#8f9096"/><path d="M1160 618 L1235 625 L1275 660 V690 H1215 V660 Z" fill="#a3a4b2"/><path d="M1300 655 L1335 635 L1380 665 V695 H1300 Z" fill="#9a9ba3"/><path d="M1380 650 L1420 640 L1440 690 H1380 Z" fill="#b0b2bf"/><path d="M1565 640 L1605 575 L1722 515 L1848 580 V735 H1565 Z" fill="#868682"/><path d="M1850 640 L1885 595 L1985 598 L2000 640 V700 H1850 Z" fill="#8b8b90"/><path d="M1995 520 L2025 440 L2140 445 L2295 370 L2380 430 V790 H2140 L1995 740 Z" fill="#6f766a"/><path d="M2025 440 L2140 445 L2295 370 L2380 430 L2300 400 L2140 480 L2010 500 Z" fill="#5c5f66"/><path d="M2005 610 H2050 V740 H2005 Z" fill="#cfd6d8"/><rect x="2270" y="670" width="38" height="100" fill="#d7d7d2"/><path d="M1060 885 L1640 850 Q1730 830 1730 800 L2380 785 V1210 H2150 L1960 1135 L1440 1090 L830 1035 Z" fill="url(#clawn)"/><path d="M1440 740 H1860 L1840 775 H1560 Z" fill="#58a038"/><path d="M1100 855 Q1400 850 1640 805 L1640 825 Q1400 870 1090 872 Z" fill="#57a035"/><path d="M300 760 L600 775 L395 880 H300 Z" fill="#4f9a2e"/><path d="M480 665 H620 V720 L520 735 Z" fill="#5da03c"/><path d="M1075 878 Q1420 872 1640 825 Q1700 805 1640 780 L1720 778 Q1790 815 1700 845 Q1450 900 1060 892 Z" fill="#d9d8cf"/><path d="M1720 790 L1860 775 L1870 790 L1735 805 Z" fill="#d6d5cd"/><path d="M300 735 L600 760 L600 775 L300 760 Z" fill="#d8d7d0"/><path d="M310 880 L1075 878 L830 1040 L640 1140 L1170 1125 L1165 1210 H560 L350 1110 Z" fill="#dcdbd6"/><path d="M330 950 L470 930 L960 900 L760 1020 L560 1045 L330 985 Z" fill="#6d6f74" opacity="0.75"/><path d="M320 680 L350 660 L420 660 L445 690 V712 H325 Z" fill="#1f232c"/><path d="M1278 722 L1310 705 L1400 705 L1438 735 V762 H1285 Z" fill="#2f3540"/><path d="M1865 705 L1990 698 L2040 720 V785 H1880 Z" fill="#1d1f22"/><path d="M880 680 H960 V715 H880 Z" fill="#3a3d42"/><path d="M790 685 L860 680 L870 710 H795 Z" fill="#6d7068"/><path d="M978 700 Q980 690 995 690 L1150 695 Q1180 700 1195 745 L1265 790 L1270 835 L950 815 L945 770 Z" fill="#e6e6e2"/><path d="M1012 720 L1080 722 L1075 760 L1010 755 Z" fill="#2b4fa8"/><path d="M1105 725 L1175 728 L1185 775 L1105 770 Z" fill="#50545c"/><ellipse cx="1025" cy="828" rx="26" ry="18" fill="#2a2a2c"/><ellipse cx="1225" cy="832" rx="24" ry="17" fill="#2a2a2c"/><path d="M388 770 L600 768 L625 705 L800 705 L880 770 L935 790 L945 850 L930 905 L790 920 L760 985 L640 965 L470 940 L385 895 Z" fill="#1c2027"/><path d="M640 715 L790 715 L850 770 L640 775 Z" fill="#2c3340"/><path d="M606 825 H652 V905 H606 Z" fill="#d3273a"/><path d="M385 880 L470 925 L640 960 L640 985 L470 955 L385 910 Z" fill="#b9bcc0"/><ellipse cx="728" cy="955" rx="36" ry="62" fill="#15171b"/><ellipse cx="732" cy="955" rx="18" ry="34" fill="#a8abb0"/><ellipse cx="925" cy="875" rx="18" ry="38" fill="#15171b"/><ellipse cx="927" cy="875" rx="8" ry="19" fill="#a8abb0"/><rect x="412" y="470" width="7" height="295" fill="#3a3d40"/><path d="M405 440 L428 440 L432 462 L400 462 Z" fill="#2c2e31"/><path d="M750 1085 L835 1040 L1400 1090 L1430 1135 L1250 1210 H1160 L1172 1128 L900 1120 Z" fill="#3a322f"/><path d="M1250 1210 L1400 1095 L1440 1100 L1440 1210 Z" fill="#988f82"/><path d="M640 1140 L760 1085 L900 1120 L1172 1128 L1165 1210 H640 Z" fill="#dedcd6"/><path d="M520 1130 Q560 1090 590 1140 Q640 1150 700 1185 L830 1195 V1210 H520 Z" fill="#4a7a35"/><ellipse cx="870" cy="1030" rx="45" ry="28" fill="#3f6a33"/><ellipse cx="1000" cy="1045" rx="40" ry="28" fill="#3f6a33"/><ellipse cx="1200" cy="1060" rx="60" ry="34" fill="#3f6a33"/><ellipse cx="1050" cy="1030" rx="25" ry="30" fill="#3f6a33"/><path d="M1432 1090 L1880 1062 L1990 1128 L1985 1210 H1440 Z" fill="#eef0f3"/><path d="M1475 1105 L1860 1080 L1930 1122 L1500 1180 Z" fill="#35352f"/><circle cx="1405" cy="1018" r="17" fill="#d8334d"/><circle cx="1440" cy="1040" r="17" fill="#d8334d"/><circle cx="1530" cy="1055" r="17" fill="#d8334d"/><circle cx="1600" cy="1032" r="17" fill="#d8334d"/><circle cx="1612" cy="1100" r="17" fill="#d8334d"/><circle cx="1700" cy="1045" r="17" fill="#d8334d"/><circle cx="1770" cy="1025" r="17" fill="#d8334d"/><circle cx="1850" cy="1040" r="17" fill="#d8334d"/><circle cx="1870" cy="1020" r="17" fill="#d8334d"/><circle cx="1790" cy="1060" r="17" fill="#d8334d"/><circle cx="1380" cy="1045" r="17" fill="#d8334d"/><path d="M25 25 H450 L395 130 Q320 400 300 700 Q300 950 350 1110 L560 1210 H25 Z" fill="url(#cside)"/><linearGradient id="csidetop" x1="0" y1="0" x2="0" y2="1"><stop offset="0" stop-color="#4e525c" stop-opacity="0.75"/><stop offset="1" stop-color="#4e525c" stop-opacity="0"/></linearGradient><path d="M25 25 H450 L395 130 Q360 250 345 330 H25 Z" fill="url(#csidetop)"/><path d="M25 150 Q200 164 345 192" stroke="#59617a" stroke-width="4" fill="none" opacity="0.6"/><path d="M25 216 Q200 230 340 258" stroke="#59617a" stroke-width="4" fill="none" opacity="0.6"/><path d="M25 282 Q200 296 335 324" stroke="#59617a" stroke-width="4" fill="none" opacity="0.6"/><path d="M25 348 Q200 362 330 390" stroke="#59617a" stroke-width="4" fill="none" opacity="0.6"/><path d="M25 414 Q200 428 325 456" stroke="#59617a" stroke-width="4" fill="none" opacity="0.6"/><path d="M25 480 Q200 494 320 522" stroke="#59617a" stroke-width="4" fill="none" opacity="0.6"/><path d="M25 546 Q200 560 315 588" stroke="#59617a" stroke-width="4" fill="none" opacity="0.6"/><path d="M25 612 Q200 626 310 654" stroke="#59617a" stroke-width="4" fill="none" opacity="0.6"/><path d="M25 678 Q200 692 305 720" stroke="#59617a" stroke-width="4" fill="none" opacity="0.6"/><path d="M25 744 Q200 758 300 786" stroke="#59617a" stroke-width="4" fill="none" opacity="0.6"/><path d="M25 810 Q200 824 300 852" stroke="#59617a" stroke-width="4" fill="none" opacity="0.6"/><path d="M25 876 Q200 890 300 918" stroke="#59617a" stroke-width="4" fill="none" opacity="0.6"/><path d="M25 942 Q200 956 300 984" stroke="#59617a" stroke-width="4" fill="none" opacity="0.6"/><path d="M25 1008 Q200 1022 300 1050" stroke="#59617a" stroke-width="4" fill="none" opacity="0.6"/><path d="M25 1074 Q200 1088 300 1116" stroke="#59617a" stroke-width="4" fill="none" opacity="0.6"/><path d="M25 1140 Q200 1154 300 1182" stroke="#59617a" stroke-width="4" fill="none" opacity="0.6"/><path d="M397 130 Q322 400 302 700 Q302 950 352 1110" stroke="#565d72" stroke-width="7" fill="none" opacity="0.8"/><path d="M350 1110 L560 1210 H25 V1130 Z" fill="#747c93"/><linearGradient id="croofl" x1="0" y1="0" x2="1" y2="0"><stop offset="0" stop-color="#6f7378"/><stop offset="0.45" stop-color="#a4a6a6"/><stop offset="1" stop-color="#d6d6d2"/></linearGradient><path d="M330 62 L455 25 H830 Q600 60 400 128 Z" fill="url(#croofl)"/><path d="M1200 25 H2200 L2100 112 L1890 98 Q1560 42 1200 25 Z" fill="#e3e5e8"/><path d="M1500 25 H2200 L2150 68 Q1850 40 1500 25 Z" fill="#cfd2d8"/><path d="M1890 98 L2100 112 L2080 135 L1900 125 Z" fill="#f4f5f7"/><path d="M1895 110 L1915 150 L1990 160" stroke="#e9ebef" stroke-width="12" fill="none"/><path d="M1985 125 L2072 125 Q2140 500 2130 800 Q2120 1000 2085 1195 L1995 1195 Q2045 1000 2048 800 Q2050 450 1985 125 Z" fill="url(#cpil)"/><path d="M1960 1160 Q2040 1140 2110 1165 L2110 1210 H1950 Z" fill="#e9ebf0"/><rect x="25" y="25" width="2350" height="1175" fill="url(#cvig)"/></g></svg>
<svg style="left:840.4px;top:1213px;" width="36" height="28" viewBox="0 0 36 28"><rect width="27.5" height="28" rx="4" fill="#fff"/><path d="M26 10 L35.6 2.5 V25.5 L26 18 Z" fill="#fff"/></svg>
<div style="top:1207.5px;height:40px;line-height:40px;font-size:25px;color:#ffffff;white-space:nowrap;letter-spacing:0.38px;left:898.5px;-webkit-text-stroke:0.6px #fff;">Live</div>
<div style="left:770px;top:1590px;width:648px;height:166px;background:#f3f5fc;"></div>
<div style="left:795.4px;top:1611.6px;width:100.7px;height:50.4px;background:#c2e7ff;border-radius:26px;"></div>
<svg style="left:827.8px;top:1623px;" width="36" height="33" viewBox="0 0 36 33"><path d="M18 33 L15.4 30.6 C6.1 22.2 0 16.7 0 9.9 C0 4.4 4.4 0 9.9 0 C13 0 16 1.4 18 3.7 C20 1.4 23 0 26.1 0 C31.6 0 36 4.4 36 9.9 C36 16.7 29.9 22.2 20.6 30.6 Z" fill="#001d35"/></svg>
<svg style="left:952px;top:1625px;" width="37" height="29" viewBox="0 0 37 29"><g fill="none" stroke="#444746" stroke-width="2.9"><path d="M32.4 1.9 H3.5 Q1.8 1.9 1.8 3.6 V26.2 H9"/><rect x="25.6" y="11" width="8.8" height="15.2"/><circle cx="16.2" cy="20.9" r="3.7"/><path d="M14.7 17.2 V14.6 H17.7 V17.2 M14.7 24.6 V27.2 H17.7 V24.6" stroke-width="2.2"/></g></svg>
<svg style="left:1074px;top:1620px;" width="42" height="42" viewBox="0 0 42 42"><path d="M14 9.8 Q16.6 18.4 25.2 21 Q16.6 23.6 14 32.2 Q11.4 23.6 2.8000000000000007 21 Q11.4 18.4 14 9.8 Z" fill="none" stroke="#444746" stroke-width="3" stroke-linejoin="round"/><path d="M33 1.0999999999999996 Q34.5 6.0 39.4 7.5 Q34.5 9.0 33 13.9 Q31.5 9.0 26.6 7.5 Q31.5 6.0 33 1.0999999999999996 Z" fill="#444746"/><path d="M33 27.6 Q34.5 32.5 39.4 34 Q34.5 35.5 33 40.4 Q31.5 35.5 26.6 34 Q31.5 32.5 33 27.6 Z" fill="#444746"/></svg>
<svg style="left:1203px;top:1620.5px;" width="31" height="38" viewBox="0 0 31 38"><g fill="none" stroke="#444746" stroke-width="3"><path d="M5.9 29.5 V16 Q5.9 6 15.35 6 Q24.8 6 24.8 16 V29.5"/><path d="M1 29.6 H29.7" stroke-width="3.2"/></g><rect x="13.2" y="0.7" width="4.3" height="5.4" rx="2.1" fill="#444746"/><path d="M11.3 33.5 H19.4 Q19 36.7 15.35 36.7 Q11.7 36.7 11.3 33.5 Z" fill="#444746"/></svg>
<svg style="left:1324px;top:1619px;" width="40" height="40" viewBox="0 0 40 40"><g transform="translate(20 20)" fill="none" stroke="#444746" stroke-width="3.1" stroke-linejoin="miter"><path d="M-4.16 -11.04 L-3.78 -16.16 L3.78 -16.16 L4.16 -11.04 L7.49 -9.12 L12.11 -11.36 L15.89 -4.80 L11.64 -1.92 L11.64 1.92 L15.89 4.80 L12.11 11.36 L7.49 9.12 L4.16 11.04 L3.78 16.16 L-3.78 16.16 L-4.16 11.04 L-7.49 9.12 L-12.11 11.36 L-15.89 4.80 L-11.64 1.92 L-11.64 -1.92 L-15.89 -4.80 L-12.11 -11.36 L-7.49 -9.12 Z"/><circle r="4.3"/></g></svg>
<div style="top:1669px;height:29px;line-height:29px;font-size:18.55px;color:#1f1f1f;white-space:nowrap;left:446px;width:800px;text-align:center;-webkit-text-stroke:0.45px #1f1f1f;">Favorites</div>
<div style="top:1669px;height:29px;line-height:29px;font-size:18.39px;color:#444746;white-space:nowrap;left:570px;width:800px;text-align:center;-webkit-text-stroke:0.45px #444746;">Devices</div>
<div style="top:1668.5px;height:30px;line-height:30px;font-size:19.18px;color:#444746;white-space:nowrap;left:694.3px;width:800px;text-align:center;-webkit-text-stroke:0.45px #444746;">Automations</div>
<div style="top:1668px;height:31px;line-height:31px;font-size:19.61px;color:#444746;white-space:nowrap;left:818.3px;width:800px;text-align:center;-webkit-text-stroke:0.45px #444746;">Notifications</div>
<div style="top:1668.5px;height:30px;line-height:30px;font-size:18.76px;color:#444746;white-space:nowrap;left:942.3px;width:800px;text-align:center;-webkit-text-stroke:0.45px #444746;">Settings</div>
<div style="left:769.5px;top:314.5px;width:649.5px;height:1442.5px;border:2px solid #8e8e8e;border-radius:60px / 70px;box-shadow:inset 0 7px 9px -5px rgba(0,0,0,.16);"></div>
<div style="top:278.5px;height:35px;line-height:35px;font-size:22px;color:#8b8b8b;white-space:nowrap;letter-spacing:0.54px;left:771px;">Google home</div>
<div style="left:646px;top:292px;width:127px;height:54px;background:#1f1f1f;border-radius:6px;"></div>
<div style="left:707px;top:296px;width:2px;height:46px;background:#191919;"></div>
<svg style="left:664px;top:309px;" width="24" height="20" viewBox="0 0 24 20"><path d="M23 10 H3 M11 2 L3 10 L11 18" fill="none" stroke="#8a8a8a" stroke-width="2.6"/></svg>
<svg style="left:731px;top:309px;" width="24" height="20" viewBox="0 0 24 20"><path d="M1 10 H21 M13 2 L21 10 L13 18" fill="none" stroke="#8a8a8a" stroke-width="2.6"/></svg>
<div style="left:646px;top:1738px;width:188px;height:56px;background:#1f1f1f;border-radius:5px;box-shadow:0 2px 6px rgba(0,0,0,.5);"></div>
<div style="left:659px;top:1764.5px;width:17px;height:2.6px;background:#8f8f8f;"></div>
<div style="top:1746.5px;height:38px;line-height:38px;font-size:24px;color:#f0f0f0;white-space:nowrap;letter-spacing:0.6px;left:339.5px;width:800px;text-align:center;">90%</div>
<svg style="left:803px;top:1757px;" width="18" height="18" viewBox="0 0 18 18"><path d="M9 0 V18 M0 9 H18" stroke="#9a9a9a" stroke-width="2.6" fill="none"/></svg>
<div style="left:1440px;top:1729.5px;width:64px;height:64px;background:#1f1f1f;border-radius:50%;"></div>
<div style="top:1740.5px;height:43px;line-height:43px;font-size:27px;color:#f4f4f4;white-space:nowrap;font-weight:700;left:1072px;width:800px;text-align:center;">?</div>
<div style="left:1536px;top:260px;width:9px;height:1566px;background:#2b2b2b;"></div>
<!-- s4_timeline -->
<div style="left:1545px;top:260px;width:1009px;height:1566px;background:#1f1f1f;"></div>
<div style="left:1580px;top:262px;width:362px;height:64px;background:#2c2c2c;"></div>
<svg style="left:1600px;top:262px;" width="30" height="64"><path d="M9 5 V64" stroke="#8c8c8c" stroke-width="2" stroke-dasharray="6 4" fill="none"/><path d="M10 36.5 H24" stroke="#8c8c8c" stroke-width="2" stroke-dasharray="4 4" fill="none"/></svg>
<svg style="left:1639px;top:279px;" width="30" height="30" viewBox="0 0 30 30"><circle cx="15" cy="15" r="4.6" fill="#9a9a9a"/><path d="M15 0 L20 6.5 H10 Z M15 30 L20 23.5 H10 Z M0 15 L6.5 10 V20 Z M30 15 L23.5 10 V20 Z" fill="#f0f0f0"/></svg>
<div style="top:273.5px;height:41px;line-height:41px;font-size:26px;color:#ececec;white-space:nowrap;letter-spacing:1.14px;left:1683px;">Move</div>
<div style="left:1896.7px;top:281.0px;width:26px;height:26px;background:#34a853;border-radius:50%;"></div>
<div style="left:1580px;top:328px;width:362px;height:34px;background:#2c2c2c;"></div>
<svg style="left:1600px;top:326px;" width="30" height="36"><path d="M9 5 V19.5" stroke="#8c8c8c" stroke-width="2" stroke-dasharray="6 4" fill="none"/><path d="M10 19.5 H24" stroke="#8c8c8c" stroke-width="2" stroke-dasharray="4 4" fill="none"/></svg>
<svg style="left:1646px;top:337px;" width="16" height="16" viewBox="0 0 16 16"><path d="M8.0 0 V16 M0 8.0 H16" stroke="#f0f0f0" stroke-width="2.6" fill="none"/></svg>
<div style="left:1580px;top:386px;width:362px;height:64px;background:#393939;"></div>
<svg style="left:1597px;top:406px;" width="28" height="24" viewBox="0 0 28 24"><g fill="#f0f0f0"><rect x="0" y="8" width="3.2" height="8"/><rect x="6" y="6" width="3.2" height="12"/><rect x="12" y="0" width="3.6" height="24"/><rect x="18.4" y="3.5" width="3.2" height="17"/><rect x="24.6" y="8" width="3.2" height="8"/></g></svg>
<div style="top:396px;height:44px;line-height:44px;font-size:28px;color:#ececec;white-space:nowrap;letter-spacing:-0.74px;left:1638.5px;">Sound</div>
<svg style="left:1552.5px;top:411px;" width="14" height="10" viewBox="0 0 14 10"><path d="M0 0 H14 L7 10 Z" fill="#8a8a8a"/></svg>
<div style="left:1580px;top:452px;width:362px;height:42px;background:#393939;"></div>
<svg style="left:1605px;top:462px;" width="24" height="22" viewBox="0 0 24 22"><path d="M6 11 Q12.5 11 18 4.8 M6 11 Q12.5 11 18 17.2" stroke="#a0a0a0" stroke-width="2.4" fill="none"/><path d="M0.6 11 L5 6.6 L9.4 11 L5 15.4 Z" fill="#f0f0f0"/><circle cx="19.6" cy="4.4" r="3.5" fill="#f0f0f0"/><circle cx="19.6" cy="17.6" r="3.5" fill="#f0f0f0"/></svg>
<div style="top:454px;height:38px;line-height:38px;font-size:24px;color:#ececec;white-space:nowrap;letter-spacing:-0.11px;left:1640.5px;">Condition</div>
<div style="left:1580px;top:496px;width:362px;height:64px;background:#2c2c2c;"></div>
<svg style="left:1600px;top:496px;" width="30" height="64"><path d="M9 5 V64" stroke="#8c8c8c" stroke-width="2" stroke-dasharray="6 4" fill="none"/><path d="M10 36.5 H24" stroke="#8c8c8c" stroke-width="2" stroke-dasharray="4 4" fill="none"/></svg>
<svg style="left:1641px;top:515px;" width="26" height="26" viewBox="0 0 26 26"><path d="M4 22 L22 4" stroke="#f0f0f0" stroke-width="3.2" fill="none"/><path d="M12.5 1 H25 V13.5 Z" fill="#f0f0f0"/><path d="M1 12.5 V25 H13.5 Z" fill="#f0f0f0"/></svg>
<div style="top:507.5px;height:41px;line-height:41px;font-size:26px;color:#ececec;white-space:nowrap;letter-spacing:0.36px;left:1683px;">Scale</div>
<div style="left:1896.7px;top:515.0px;width:26px;height:26px;background:#3f86f7;border-radius:50%;"></div>
<div style="left:1580px;top:562px;width:362px;height:64px;background:#8b7af8;"></div>
<svg style="left:1600px;top:562px;" width="30" height="64"><path d="M9 5 V64" stroke="#ffffff" stroke-width="2" stroke-dasharray="6 4" fill="none"/><path d="M10 36.5 H24" stroke="#ffffff" stroke-width="2" stroke-dasharray="4 4" fill="none"/></svg>
<svg style="left:1641px;top:581px;" width="26" height="26" viewBox="0 0 26 26"><path d="M4 22 L22 4" stroke="#f0f0f0" stroke-width="3.2" fill="none"/><path d="M12.5 1 H25 V13.5 Z" fill="#f0f0f0"/><path d="M1 12.5 V25 H13.5 Z" fill="#f0f0f0"/></svg>
<div style="top:573.5px;height:41px;line-height:41px;font-size:26px;color:#ffffff;white-space:nowrap;letter-spacing:0.36px;left:1683px;">Scale</div>
<div style="left:1896.7px;top:581.0px;width:26px;height:26px;background:#ea4335;border-radius:50%;"></div>
<div style="left:1580px;top:628px;width:362px;height:64px;background:#2c2c2c;"></div>
<svg style="left:1600px;top:628px;" width="30" height="64"><path d="M9 5 V64" stroke="#8c8c8c" stroke-width="2" stroke-dasharray="6 4" fill="none"/><path d="M10 36.5 H24" stroke="#8c8c8c" stroke-width="2" stroke-dasharray="4 4" fill="none"/></svg>
<svg style="left:1641px;top:647px;" width="26" height="26" viewBox="0 0 26 26"><path d="M4 22 L22 4" stroke="#f0f0f0" stroke-width="3.2" fill="none"/><path d="M12.5 1 H25 V13.5 Z" fill="#f0f0f0"/><path d="M1 12.5 V25 H13.5 Z" fill="#f0f0f0"/></svg>
<div style="top:639.5px;height:41px;line-height:41px;font-size:26px;color:#ececec;white-space:nowrap;letter-spacing:0.36px;left:1683px;">Scale</div>
<div style="left:1896.7px;top:647.0px;width:26px;height:26px;background:#fbb714;border-radius:50%;"></div>
<div style="left:1580px;top:694px;width:362px;height:64px;background:#2c2c2c;"></div>
<svg style="left:1600px;top:694px;" width="30" height="64"><path d="M9 5 V64" stroke="#8c8c8c" stroke-width="2" stroke-dasharray="6 4" fill="none"/><path d="M10 36.5 H24" stroke="#8c8c8c" stroke-width="2" stroke-dasharray="4 4" fill="none"/></svg>
<svg style="left:1641px;top:713px;" width="26" height="26" viewBox="0 0 26 26"><path d="M4 22 L22 4" stroke="#f0f0f0" stroke-width="3.2" fill="none"/><path d="M12.5 1 H25 V13.5 Z" fill="#f0f0f0"/><path d="M1 12.5 V25 H13.5 Z" fill="#f0f0f0"/></svg>
<div style="top:705.5px;height:41px;line-height:41px;font-size:26px;color:#ececec;white-space:nowrap;letter-spacing:0.36px;left:1683px;">Scale</div>
<div style="left:1896.7px;top:713.0px;width:26px;height:26px;background:#34a853;border-radius:50%;"></div>
<div style="left:1580px;top:760px;width:362px;height:34px;background:#2c2c2c;"></div>
<svg style="left:1600px;top:758px;" width="30" height="36"><path d="M9 5 V19.5" stroke="#8c8c8c" stroke-width="2" stroke-dasharray="6 4" fill="none"/><path d="M10 19.5 H24" stroke="#8c8c8c" stroke-width="2" stroke-dasharray="4 4" fill="none"/></svg>
<svg style="left:1646px;top:769px;" width="16" height="16" viewBox="0 0 16 16"><path d="M8.0 0 V16 M0 8.0 H16" stroke="#f0f0f0" stroke-width="2.6" fill="none"/></svg>
<div style="top:457px;height:35px;line-height:35px;font-size:22px;color:#a9a9a9;white-space:nowrap;letter-spacing:-0.08px;left:1962.5px;">state = "listening"</div>
<div style="top:457px;height:35px;line-height:35px;font-size:22px;color:#a9a9a9;white-space:nowrap;letter-spacing:-0.11px;left:2174.5px;">Width of blue = 20</div>
<div style="left:2146px;top:513px;width:362px;height:32px;background:#555555;border-radius:4px;"></div>
<div style="left:2106px;top:579px;width:322px;height:32px;background:#5b43c0;border-radius:4px;"></div>
<div style="left:2186px;top:645px;width:162px;height:32px;background:#555555;border-radius:4px;"></div>
<div style="left:2146px;top:711px;width:202px;height:32px;background:#555555;border-radius:4px;"></div>
<div style="left:1580px;top:818px;width:362px;height:64px;background:#393939;"></div>
<svg style="left:1597px;top:837px;" width="28" height="27" viewBox="0 0 28 27"><path d="M2 2 L14 15 L25 4" fill="none" stroke="#f0f0f0" stroke-width="3"/><path d="M15.5 3 H26 V13.5 Z" fill="#f0f0f0"/><rect x="0" y="22" width="28" height="3.4" fill="#9a9a9a"/></svg>
<div style="top:828px;height:44px;line-height:44px;font-size:28px;color:#ececec;white-space:nowrap;letter-spacing:-0.08px;left:1638.5px;">Tap assistant</div>
<svg style="left:1552.5px;top:843px;" width="14" height="10" viewBox="0 0 14 10"><path d="M0 0 H14 L7 10 Z" fill="#8a8a8a"/></svg>
<div style="left:1896px;top:841.0px;width:28.5px;height:19px;background:#f3f0fa;border:2px dashed #e0356f;border-radius:4px;"></div>
<div style="top:838px;height:29px;line-height:29px;font-size:18.5px;color:#b9b9b9;white-space:nowrap;letter-spacing:0.3px;left:1562px;width:800px;text-align:center;">0</div>
<div style="top:838px;height:29px;line-height:29px;font-size:18.5px;color:#b9b9b9;white-space:nowrap;letter-spacing:0.3px;left:1642px;width:800px;text-align:center;">0.2</div>
<div style="top:838px;height:29px;line-height:29px;font-size:18.5px;color:#b9b9b9;white-space:nowrap;letter-spacing:0.3px;left:1722px;width:800px;text-align:center;">0.4</div>
<div style="top:838px;height:29px;line-height:29px;font-size:18.5px;color:#b9b9b9;white-space:nowrap;letter-spacing:0.3px;left:1802px;width:800px;text-align:center;">0.6</div>
<div style="top:838px;height:29px;line-height:29px;font-size:18.5px;color:#b9b9b9;white-space:nowrap;letter-spacing:0.3px;left:1882px;width:800px;text-align:center;">0.8</div>
<div style="top:838px;height:29px;line-height:29px;font-size:18.5px;color:#b9b9b9;white-space:nowrap;letter-spacing:0.3px;left:1962px;width:800px;text-align:center;">1</div>
<div style="top:838px;height:29px;line-height:29px;font-size:18.5px;color:#b9b9b9;white-space:nowrap;letter-spacing:0.3px;left:2042px;width:800px;text-align:center;">1.2</div>
<div style="top:838px;height:29px;line-height:29px;font-size:18.5px;color:#b9b9b9;white-space:nowrap;letter-spacing:0.3px;left:2122px;width:800px;text-align:center;">1.4</div>
<svg style="left:1960px;top:872px;" width="590" height="8"><rect x="1" y="0" width="2" height="8" fill="#929292"/><rect x="9" y="4" width="2" height="4" fill="#7a7a7a"/><rect x="17" y="4" width="2" height="4" fill="#7a7a7a"/><rect x="25" y="4" width="2" height="4" fill="#7a7a7a"/><rect x="33" y="4" width="2" height="4" fill="#7a7a7a"/><rect x="41" y="0" width="2" height="8" fill="#929292"/><rect x="49" y="4" width="2" height="4" fill="#7a7a7a"/><rect x="57" y="4" width="2" height="4" fill="#7a7a7a"/><rect x="65" y="4" width="2" height="4" fill="#7a7a7a"/><rect x="73" y="4" width="2" height="4" fill="#7a7a7a"/><rect x="81" y="0" width="2" height="8" fill="#929292"/><rect x="89" y="4" width="2" height="4" fill="#7a7a7a"/><rect x="97" y="4" width="2" height="4" fill="#7a7a7a"/><rect x="105" y="4" width="2" height="4" fill="#7a7a7a"/><rect x="113" y="4" width="2" height="4" fill="#7a7a7a"/><rect x="121" y="0" width="2" height="8" fill="#929292"/><rect x="129" y="4" width="2" height="4" fill="#7a7a7a"/><rect x="137" y="4" width="2" height="4" fill="#7a7a7a"/><rect x="145" y="4" width="2" height="4" fill="#7a7a7a"/><rect x="153" y="4" width="2" height="4" fill="#7a7a7a"/><rect x="161" y="0" width="2" height="8" fill="#929292"/><rect x="169" y="4" width="2" height="4" fill="#7a7a7a"/><rect x="177" y="4" width="2" height="4" fill="#7a7a7a"/><rect x="185" y="4" width="2" height="4" fill="#7a7a7a"/><rect x="193" y="4" width="2" height="4" fill="#7a7a7a"/><rect x="201" y="0" width="2" height="8" fill="#929292"/><rect x="209" y="4" width="2" height="4" fill="#7a7a7a"/><rect x="217" y="4" width="2" height="4" fill="#7a7a7a"/><rect x="225" y="4" width="2" height="4" fill="#7a7a7a"/><rect x="233" y="4" width="2" height="4" fill="#7a7a7a"/><rect x="241" y="0" width="2" height="8" fill="#929292"/><rect x="249" y="4" width="2" height="4" fill="#7a7a7a"/><rect x="257" y="4" width="2" height="4" fill="#7a7a7a"/><rect x="265" y="4" width="2" height="4" fill="#7a7a7a"/><rect x="273" y="4" width="2" height="4" fill="#7a7a7a"/><rect x="281" y="0" width="2" height="8" fill="#929292"/><rect x="289" y="4" width="2" height="4" fill="#7a7a7a"/><rect x="297" y="4" width="2" height="4" fill="#7a7a7a"/><rect x="305" y="4" width="2" height="4" fill="#7a7a7a"/><rect x="313" y="4" width="2" height="4" fill="#7a7a7a"/><rect x="321" y="0" width="2" height="8" fill="#929292"/><rect x="329" y="4" width="2" height="4" fill="#7a7a7a"/><rect x="337" y="4" width="2" height="4" fill="#7a7a7a"/><rect x="345" y="4" width="2" height="4" fill="#7a7a7a"/><rect x="353" y="4" width="2" height="4" fill="#7a7a7a"/><rect x="361" y="0" width="2" height="8" fill="#929292"/><rect x="369" y="4" width="2" height="4" fill="#7a7a7a"/><rect x="377" y="4" width="2" height="4" fill="#7a7a7a"/><rect x="385" y="4" width="2" height="4" fill="#7a7a7a"/><rect x="393" y="4" width="2" height="4" fill="#7a7a7a"/><rect x="401" y="0" width="2" height="8" fill="#929292"/><rect x="409" y="4" width="2" height="4" fill="#7a7a7a"/><rect x="417" y="4" width="2" height="4" fill="#7a7a7a"/><rect x="425" y="4" width="2" height="4" fill="#7a7a7a"/><rect x="433" y="4" width="2" height="4" fill="#7a7a7a"/><rect x="441" y="0" width="2" height="8" fill="#929292"/><rect x="449" y="4" width="2" height="4" fill="#7a7a7a"/><rect x="457" y="4" width="2" height="4" fill="#7a7a7a"/><rect x="465" y="4" width="2" height="4" fill="#7a7a7a"/><rect x="473" y="4" width="2" height="4" fill="#7a7a7a"/><rect x="481" y="0" width="2" height="8" fill="#929292"/><rect x="489" y="4" width="2" height="4" fill="#7a7a7a"/><rect x="497" y="4" width="2" height="4" fill="#7a7a7a"/><rect x="505" y="4" width="2" height="4" fill="#7a7a7a"/><rect x="513" y="4" width="2" height="4" fill="#7a7a7a"/><rect x="521" y="0" width="2" height="8" fill="#929292"/><rect x="529" y="4" width="2" height="4" fill="#7a7a7a"/><rect x="537" y="4" width="2" height="4" fill="#7a7a7a"/><rect x="545" y="4" width="2" height="4" fill="#7a7a7a"/><rect x="553" y="4" width="2" height="4" fill="#7a7a7a"/><rect x="561" y="0" width="2" height="8" fill="#929292"/><rect x="569" y="4" width="2" height="4" fill="#7a7a7a"/><rect x="577" y="4" width="2" height="4" fill="#7a7a7a"/><rect x="585" y="4" width="2" height="4" fill="#7a7a7a"/></svg>
<div style="left:1580px;top:884px;width:362px;height:64px;background:#2c2c2c;"></div>
<svg style="left:1600px;top:884px;" width="30" height="64"><path d="M9 5 V64" stroke="#8c8c8c" stroke-width="2" stroke-dasharray="6 4" fill="none"/><path d="M10 36.5 H24" stroke="#8c8c8c" stroke-width="2" stroke-dasharray="4 4" fill="none"/></svg>
<svg style="left:1641px;top:903px;" width="26" height="26" viewBox="0 0 26 26"><path d="M4 22 L22 4" stroke="#f0f0f0" stroke-width="3.2" fill="none"/><path d="M12.5 1 H25 V13.5 Z" fill="#f0f0f0"/><path d="M1 12.5 V25 H13.5 Z" fill="#f0f0f0"/></svg>
<div style="top:895.5px;height:41px;line-height:41px;font-size:26px;color:#ececec;white-space:nowrap;letter-spacing:0.36px;left:1683px;">Scale</div>
<div style="left:1896px;top:906.5px;width:28.5px;height:19px;background:#f3f0fa;border:2px dashed #e0356f;border-radius:4px;"></div>
<div style="left:1962px;top:901px;width:162px;height:32px;background:#555555;border-radius:4px;"></div>
<div style="left:1580px;top:950px;width:362px;height:64px;background:#2c2c2c;"></div>
<svg style="left:1600px;top:950px;" width="30" height="64"><path d="M9 5 V64" stroke="#8c8c8c" stroke-width="2" stroke-dasharray="6 4" fill="none"/><path d="M10 36.5 H24" stroke="#8c8c8c" stroke-width="2" stroke-dasharray="4 4" fill="none"/></svg>
<svg style="left:1639px;top:968px;" width="32" height="28" viewBox="0 0 32 28"><g fill="#9c9c9c"><rect x="0" y="6" width="3" height="9"/><rect x="6" y="1" width="3" height="19"/><rect x="12" y="4" width="3" height="13"/></g><path d="M15.5 26 L21.8 10.5 H24.6 L30.8 26 H27.4 L26.2 22.6 H20.2 L19 26 Z M21.1 20 H25.3 L23.2 14 Z" fill="#f0f0f0"/></svg>
<div style="top:961.5px;height:41px;line-height:41px;font-size:26px;color:#ececec;white-space:nowrap;letter-spacing:0.69px;left:1683px;">Speak</div>
<div style="left:1580px;top:1016px;width:362px;height:64px;background:#2c2c2c;"></div>
<svg style="left:1600px;top:1016px;" width="30" height="64"><path d="M9 5 V64" stroke="#8c8c8c" stroke-width="2" stroke-dasharray="6 4" fill="none"/><path d="M10 36.5 H24" stroke="#8c8c8c" stroke-width="2" stroke-dasharray="4 4" fill="none"/></svg>
<svg style="left:1639px;top:1032px;" width="30" height="32" viewBox="0 0 30 32"><rect x="10" y="0" width="10" height="19" rx="5" fill="#f2f2f2"/><path d="M3 13 Q3 25 15 25 Q27 25 27 13" fill="none" stroke="#8f8f8f" stroke-width="3.2"/><path d="M15 25 V31" stroke="#8f8f8f" stroke-width="3.4"/></svg>
<div style="top:1027.5px;height:41px;line-height:41px;font-size:26px;color:#ececec;white-space:nowrap;letter-spacing:0.82px;left:1683px;">Listen</div>
<div style="left:1580px;top:1082px;width:362px;height:64px;background:#2c2c2c;"></div>
<svg style="left:1600px;top:1082px;" width="30" height="64"><path d="M9 5 V64" stroke="#8c8c8c" stroke-width="2" stroke-dasharray="6 4" fill="none"/><path d="M10 36.5 H24" stroke="#8c8c8c" stroke-width="2" stroke-dasharray="4 4" fill="none"/></svg>
<svg style="left:1639px;top:1100px;" width="32" height="30" viewBox="0 0 32 30"><path d="M1 27 Q7 27 9 18 L12 8 Q14 1 20 2.5" fill="none" stroke="#f0f0f0" stroke-width="2.8"/><path d="M17 17 L29 27 M29 17 L17 27" stroke="#f0f0f0" stroke-width="3"/></svg>
<div style="top:1093.5px;height:41px;line-height:41px;font-size:26px;color:#ececec;white-space:nowrap;letter-spacing:0.69px;left:1683px;">Assign</div>
<svg style="left:1898px;top:1102.5px;" width="23" height="23" viewBox="0 0 23 23"><rect x="1.2" y="1.2" width="20.6" height="20.6" fill="#3a3a3a" stroke="#8a8a8a" stroke-width="2.4"/><path d="M7 7 L16 16 M16 7 L7 16" stroke="#f0f0f0" stroke-width="2.6"/></svg>
<div style="left:1580px;top:1148px;width:362px;height:64px;background:#2c2c2c;"></div>
<svg style="left:1600px;top:1148px;" width="30" height="64"><path d="M9 5 V64" stroke="#8c8c8c" stroke-width="2" stroke-dasharray="6 4" fill="none"/><path d="M10 36.5 H24" stroke="#8c8c8c" stroke-width="2" stroke-dasharray="4 4" fill="none"/></svg>
<svg style="left:1639px;top:1166px;" width="32" height="30" viewBox="0 0 32 30"><path d="M1 27 Q7 27 9 18 L12 8 Q14 1 20 2.5" fill="none" stroke="#f0f0f0" stroke-width="2.8"/><path d="M17 17 L29 27 M29 17 L17 27" stroke="#f0f0f0" stroke-width="3"/></svg>
<div style="top:1159.5px;height:41px;line-height:41px;font-size:26px;color:#ececec;white-space:nowrap;letter-spacing:0.69px;left:1683px;">Assign</div>
<svg style="left:1898px;top:1168.5px;" width="23" height="23" viewBox="0 0 23 23"><rect x="1.2" y="1.2" width="20.6" height="20.6" fill="#3a3a3a" stroke="#8a8a8a" stroke-width="2.4"/><path d="M7 7 L16 16 M16 7 L7 16" stroke="#f0f0f0" stroke-width="2.6"/></svg>
<div style="left:1580px;top:1214px;width:362px;height:34px;background:#2c2c2c;"></div>
<svg style="left:1600px;top:1212px;" width="30" height="36"><path d="M9 5 V19.5" stroke="#8c8c8c" stroke-width="2" stroke-dasharray="6 4" fill="none"/><path d="M10 19.5 H24" stroke="#8c8c8c" stroke-width="2" stroke-dasharray="4 4" fill="none"/></svg>
<svg style="left:1646px;top:1223px;" width="16" height="16" viewBox="0 0 16 16"><path d="M8.0 0 V16 M0 8.0 H16" stroke="#f0f0f0" stroke-width="2.6" fill="none"/></svg>
<div style="left:1953px;top:976px;width:18px;height:18px;background:#555555;border-radius:50%;"></div>
<div style="left:1953px;top:1042px;width:18px;height:18px;background:#555555;border-radius:50%;"></div>
<div style="left:1953px;top:1108px;width:18px;height:18px;background:#555555;border-radius:50%;"></div>
<div style="left:1874px;top:1000px;width:38px;height:30px;background:#363636;border-radius:3px;box-shadow:0 2px 6px rgba(0,0,0,.55);"></div>
<svg style="left:1885px;top:1007px;" width="16" height="16" viewBox="0 0 16 16"><path d="M8.0 0 V16 M0 8.0 H16" stroke="#f0f0f0" stroke-width="2.6" fill="none"/></svg>
<div style="left:1580px;top:1272px;width:362px;height:64px;background:#393939;"></div>
<svg style="left:1597px;top:1288px;" width="30" height="32" viewBox="0 0 30 32"><rect x="10" y="0" width="10" height="19" rx="5" fill="#f2f2f2"/><path d="M3 13 Q3 25 15 25 Q27 25 27 13" fill="none" stroke="#8f8f8f" stroke-width="3.2"/><path d="M15 25 V31" stroke="#8f8f8f" stroke-width="3.4"/></svg>
<div style="top:1282px;height:44px;line-height:44px;font-size:28px;color:#ececec;white-space:nowrap;letter-spacing:-0.47px;left:1638.5px;">Voice Command ...</div>
<svg style="left:1552.5px;top:1297px;" width="14" height="10" viewBox="0 0 14 10"><path d="M0 0 H14 L7 10 Z" fill="#8a8a8a"/></svg>
<div style="top:1292px;height:29px;line-height:29px;font-size:18.5px;color:#b9b9b9;white-space:nowrap;letter-spacing:0.3px;left:1562px;width:800px;text-align:center;">0</div>
<div style="top:1292px;height:29px;line-height:29px;font-size:18.5px;color:#b9b9b9;white-space:nowrap;letter-spacing:0.3px;left:1642px;width:800px;text-align:center;">0.2</div>
<div style="top:1292px;height:29px;line-height:29px;font-size:18.5px;color:#b9b9b9;white-space:nowrap;letter-spacing:0.3px;left:1722px;width:800px;text-align:center;">0.4</div>
<div style="top:1292px;height:29px;line-height:29px;font-size:18.5px;color:#b9b9b9;white-space:nowrap;letter-spacing:0.3px;left:1802px;width:800px;text-align:center;">0.6</div>
<div style="top:1292px;height:29px;line-height:29px;font-size:18.5px;color:#b9b9b9;white-space:nowrap;letter-spacing:0.3px;left:1882px;width:800px;text-align:center;">0.8</div>
<div style="top:1292px;height:29px;line-height:29px;font-size:18.5px;color:#b9b9b9;white-space:nowrap;letter-spacing:0.3px;left:1962px;width:800px;text-align:center;">1</div>
<div style="top:1292px;height:29px;line-height:29px;font-size:18.5px;color:#b9b9b9;white-space:nowrap;letter-spacing:0.3px;left:2042px;width:800px;text-align:center;">1.2</div>
<div style="top:1292px;height:29px;line-height:29px;font-size:18.5px;color:#b9b9b9;white-space:nowrap;letter-spacing:0.3px;left:2122px;width:800px;text-align:center;">1.4</div>
<svg style="left:1960px;top:1326px;" width="590" height="8"><rect x="1" y="0" width="2" height="8" fill="#929292"/><rect x="9" y="4" width="2" height="4" fill="#7a7a7a"/><rect x="17" y="4" width="2" height="4" fill="#7a7a7a"/><rect x="25" y="4" width="2" height="4" fill="#7a7a7a"/><rect x="33" y="4" width="2" height="4" fill="#7a7a7a"/><rect x="41" y="0" width="2" height="8" fill="#929292"/><rect x="49" y="4" width="2" height="4" fill="#7a7a7a"/><rect x="57" y="4" width="2" height="4" fill="#7a7a7a"/><rect x="65" y="4" width="2" height="4" fill="#7a7a7a"/><rect x="73" y="4" width="2" height="4" fill="#7a7a7a"/><rect x="81" y="0" width="2" height="8" fill="#929292"/><rect x="89" y="4" width="2" height="4" fill="#7a7a7a"/><rect x="97" y="4" width="2" height="4" fill="#7a7a7a"/><rect x="105" y="4" width="2" height="4" fill="#7a7a7a"/><rect x="113" y="4" width="2" height="4" fill="#7a7a7a"/><rect x="121" y="0" width="2" height="8" fill="#929292"/><rect x="129" y="4" width="2" height="4" fill="#7a7a7a"/><rect x="137" y="4" width="2" height="4" fill="#7a7a7a"/><rect x="145" y="4" width="2" height="4" fill="#7a7a7a"/><rect x="153" y="4" width="2" height="4" fill="#7a7a7a"/><rect x="161" y="0" width="2" height="8" fill="#929292"/><rect x="169" y="4" width="2" height="4" fill="#7a7a7a"/><rect x="177" y="4" width="2" height="4" fill="#7a7a7a"/><rect x="185" y="4" width="2" height="4" fill="#7a7a7a"/><rect x="193" y="4" width="2" height="4" fill="#7a7a7a"/><rect x="201" y="0" width="2" height="8" fill="#929292"/><rect x="209" y="4" width="2" height="4" fill="#7a7a7a"/><rect x="217" y="4" width="2" height="4" fill="#7a7a7a"/><rect x="225" y="4" width="2" height="4" fill="#7a7a7a"/><rect x="233" y="4" width="2" height="4" fill="#7a7a7a"/><rect x="241" y="0" width="2" height="8" fill="#929292"/><rect x="249" y="4" width="2" height="4" fill="#7a7a7a"/><rect x="257" y="4" width="2" height="4" fill="#7a7a7a"/><rect x="265" y="4" width="2" height="4" fill="#7a7a7a"/><rect x="273" y="4" width="2" height="4" fill="#7a7a7a"/><rect x="281" y="0" width="2" height="8" fill="#929292"/><rect x="289" y="4" width="2" height="4" fill="#7a7a7a"/><rect x="297" y="4" width="2" height="4" fill="#7a7a7a"/><rect x="305" y="4" width="2" height="4" fill="#7a7a7a"/><rect x="313" y="4" width="2" height="4" fill="#7a7a7a"/><rect x="321" y="0" width="2" height="8" fill="#929292"/><rect x="329" y="4" width="2" height="4" fill="#7a7a7a"/><rect x="337" y="4" width="2" height="4" fill="#7a7a7a"/><rect x="345" y="4" width="2" height="4" fill="#7a7a7a"/><rect x="353" y="4" width="2" height="4" fill="#7a7a7a"/><rect x="361" y="0" width="2" height="8" fill="#929292"/><rect x="369" y="4" width="2" height="4" fill="#7a7a7a"/><rect x="377" y="4" width="2" height="4" fill="#7a7a7a"/><rect x="385" y="4" width="2" height="4" fill="#7a7a7a"/><rect x="393" y="4" width="2" height="4" fill="#7a7a7a"/><rect x="401" y="0" width="2" height="8" fill="#929292"/><rect x="409" y="4" width="2" height="4" fill="#7a7a7a"/><rect x="417" y="4" width="2" height="4" fill="#7a7a7a"/><rect x="425" y="4" width="2" height="4" fill="#7a7a7a"/><rect x="433" y="4" width="2" height="4" fill="#7a7a7a"/><rect x="441" y="0" width="2" height="8" fill="#929292"/><rect x="449" y="4" width="2" height="4" fill="#7a7a7a"/><rect x="457" y="4" width="2" height="4" fill="#7a7a7a"/><rect x="465" y="4" width="2" height="4" fill="#7a7a7a"/><rect x="473" y="4" width="2" height="4" fill="#7a7a7a"/><rect x="481" y="0" width="2" height="8" fill="#929292"/><rect x="489" y="4" width="2" height="4" fill="#7a7a7a"/><rect x="497" y="4" width="2" height="4" fill="#7a7a7a"/><rect x="505" y="4" width="2" height="4" fill="#7a7a7a"/><rect x="513" y="4" width="2" height="4" fill="#7a7a7a"/><rect x="521" y="0" width="2" height="8" fill="#929292"/><rect x="529" y="4" width="2" height="4" fill="#7a7a7a"/><rect x="537" y="4" width="2" height="4" fill="#7a7a7a"/><rect x="545" y="4" width="2" height="4" fill="#7a7a7a"/><rect x="553" y="4" width="2" height="4" fill="#7a7a7a"/><rect x="561" y="0" width="2" height="8" fill="#929292"/><rect x="569" y="4" width="2" height="4" fill="#7a7a7a"/><rect x="577" y="4" width="2" height="4" fill="#7a7a7a"/><rect x="585" y="4" width="2" height="4" fill="#7a7a7a"/></svg>
<div style="left:1580px;top:1338px;width:362px;height:64px;background:#2c2c2c;"></div>
<svg style="left:1600px;top:1338px;" width="30" height="64"><path d="M9 5 V64" stroke="#8c8c8c" stroke-width="2" stroke-dasharray="6 4" fill="none"/><path d="M10 36.5 H24" stroke="#8c8c8c" stroke-width="2" stroke-dasharray="4 4" fill="none"/></svg>
<svg style="left:1642px;top:1357px;" width="24" height="26" viewBox="0 0 24 26"><path d="M0 0 H24 V3.6 H13.8 V26 H10.2 V3.6 H0 Z" fill="#f0f0f0"/></svg>
<div style="top:1349.5px;height:41px;line-height:41px;font-size:26px;color:#ececec;white-space:nowrap;letter-spacing:1.77px;left:1683px;">Text</div>
<svg style="left:1897.7px;top:1357px;" width="24" height="26" viewBox="0 0 24 26"><path d="M0 0 H24 V3.6 H13.8 V26 H10.2 V3.6 H0 Z" fill="#f0f0f0"/></svg>
<div style="left:1953px;top:1364px;width:18px;height:18px;background:#555555;border-radius:50%;"></div>
<div style="left:1580px;top:1404px;width:362px;height:34px;background:#2c2c2c;"></div>
<svg style="left:1600px;top:1402px;" width="30" height="36"><path d="M9 5 V19.5" stroke="#8c8c8c" stroke-width="2" stroke-dasharray="6 4" fill="none"/><path d="M10 19.5 H24" stroke="#8c8c8c" stroke-width="2" stroke-dasharray="4 4" fill="none"/></svg>
<svg style="left:1646px;top:1413px;" width="16" height="16" viewBox="0 0 16 16"><path d="M8.0 0 V16 M0 8.0 H16" stroke="#f0f0f0" stroke-width="2.6" fill="none"/></svg>
<div style="left:1580px;top:1462px;width:362px;height:64px;background:#393939;"></div>
<svg style="left:1597px;top:1478px;" width="30" height="32" viewBox="0 0 30 32"><rect x="10" y="0" width="10" height="19" rx="5" fill="#f2f2f2"/><path d="M3 13 Q3 25 15 25 Q27 25 27 13" fill="none" stroke="#8f8f8f" stroke-width="3.2"/><path d="M15 25 V31" stroke="#8f8f8f" stroke-width="3.4"/></svg>
<div style="top:1472px;height:44px;line-height:44px;font-size:28px;color:#ececec;white-space:nowrap;letter-spacing:-0.47px;left:1638.5px;">Voice Command ...</div>
<svg style="left:1552.5px;top:1487px;" width="14" height="10" viewBox="0 0 14 10"><path d="M0 0 H14 L7 10 Z" fill="#8a8a8a"/></svg>
<div style="top:1482px;height:29px;line-height:29px;font-size:18.5px;color:#b9b9b9;white-space:nowrap;letter-spacing:0.3px;left:1562px;width:800px;text-align:center;">0</div>
<div style="top:1482px;height:29px;line-height:29px;font-size:18.5px;color:#b9b9b9;white-space:nowrap;letter-spacing:0.3px;left:1642px;width:800px;text-align:center;">0.2</div>
<div style="top:1482px;height:29px;line-height:29px;font-size:18.5px;color:#b9b9b9;white-space:nowrap;letter-spacing:0.3px;left:1722px;width:800px;text-align:center;">0.4</div>
<div style="top:1482px;height:29px;line-height:29px;font-size:18.5px;color:#b9b9b9;white-space:nowrap;letter-spacing:0.3px;left:1802px;width:800px;text-align:center;">0.6</div>
<div style="top:1482px;height:29px;line-height:29px;font-size:18.5px;color:#b9b9b9;white-space:nowrap;letter-spacing:0.3px;left:1882px;width:800px;text-align:center;">0.8</div>
<div style="top:1482px;height:29px;line-height:29px;font-size:18.5px;color:#b9b9b9;white-space:nowrap;letter-spacing:0.3px;left:1962px;width:800px;text-align:center;">1</div>
<div style="top:1482px;height:29px;line-height:29px;font-size:18.5px;color:#b9b9b9;white-space:nowrap;letter-spacing:0.3px;left:2042px;width:800px;text-align:center;">1.2</div>
<div style="top:1482px;height:29px;line-height:29px;font-size:18.5px;color:#b9b9b9;white-space:nowrap;letter-spacing:0.3px;left:2122px;width:800px;text-align:center;">1.4</div>
<svg style="left:1960px;top:1516px;" width="590" height="8"><rect x="1" y="0" width="2" height="8" fill="#929292"/><rect x="9" y="4" width="2" height="4" fill="#7a7a7a"/><rect x="17" y="4" width="2" height="4" fill="#7a7a7a"/><rect x="25" y="4" width="2" height="4" fill="#7a7a7a"/><rect x="33" y="4" width="2" height="4" fill="#7a7a7a"/><rect x="41" y="0" width="2" height="8" fill="#929292"/><rect x="49" y="4" width="2" height="4" fill="#7a7a7a"/><rect x="57" y="4" width="2" height="4" fill="#7a7a7a"/><rect x="65" y="4" width="2" height="4" fill="#7a7a7a"/><rect x="73" y="4" width="2" height="4" fill="#7a7a7a"/><rect x="81" y="0" width="2" height="8" fill="#929292"/><rect x="89" y="4" width="2" height="4" fill="#7a7a7a"/><rect x="97" y="4" width="2" height="4" fill="#7a7a7a"/><rect x="105" y="4" width="2" height="4" fill="#7a7a7a"/><rect x="113" y="4" width="2" height="4" fill="#7a7a7a"/><rect x="121" y="0" width="2" height="8" fill="#929292"/><rect x="129" y="4" width="2" height="4" fill="#7a7a7a"/><rect x="137" y="4" width="2" height="4" fill="#7a7a7a"/><rect x="145" y="4" width="2" height="4" fill="#7a7a7a"/><rect x="153" y="4" width="2" height="4" fill="#7a7a7a"/><rect x="161" y="0" width="2" height="8" fill="#929292"/><rect x="169" y="4" width="2" height="4" fill="#7a7a7a"/><rect x="177" y="4" width="2" height="4" fill="#7a7a7a"/><rect x="185" y="4" width="2" height="4" fill="#7a7a7a"/><rect x="193" y="4" width="2" height="4" fill="#7a7a7a"/><rect x="201" y="0" width="2" height="8" fill="#929292"/><rect x="209" y="4" width="2" height="4" fill="#7a7a7a"/><rect x="217" y="4" width="2" height="4" fill="#7a7a7a"/><rect x="225" y="4" width="2" height="4" fill="#7a7a7a"/><rect x="233" y="4" width="2" height="4" fill="#7a7a7a"/><rect x="241" y="0" width="2" height="8" fill="#929292"/><rect x="249" y="4" width="2" height="4" fill="#7a7a7a"/><rect x="257" y="4" width="2" height="4" fill="#7a7a7a"/><rect x="265" y="4" width="2" height="4" fill="#7a7a7a"/><rect x="273" y="4" width="2" height="4" fill="#7a7a7a"/><rect x="281" y="0" width="2" height="8" fill="#929292"/><rect x="289" y="4" width="2" height="4" fill="#7a7a7a"/><rect x="297" y="4" width="2" height="4" fill="#7a7a7a"/><rect x="305" y="4" width="2" height="4" fill="#7a7a7a"/><rect x="313" y="4" width="2" height="4" fill="#7a7a7a"/><rect x="321" y="0" width="2" height="8" fill="#929292"/><rect x="329" y="4" width="2" height="4" fill="#7a7a7a"/><rect x="337" y="4" width="2" height="4" fill="#7a7a7a"/><rect x="345" y="4" width="2" height="4" fill="#7a7a7a"/><rect x="353" y="4" width="2" height="4" fill="#7a7a7a"/><rect x="361" y="0" width="2" height="8" fill="#929292"/><rect x="369" y="4" width="2" height="4" fill="#7a7a7a"/><rect x="377" y="4" width="2" height="4" fill="#7a7a7a"/><rect x="385" y="4" width="2" height="4" fill="#7a7a7a"/><rect x="393" y="4" width="2" height="4" fill="#7a7a7a"/><rect x="401" y="0" width="2" height="8" fill="#929292"/><rect x="409" y="4" width="2" height="4" fill="#7a7a7a"/><rect x="417" y="4" width="2" height="4" fill="#7a7a7a"/><rect x="425" y="4" width="2" height="4" fill="#7a7a7a"/><rect x="433" y="4" width="2" height="4" fill="#7a7a7a"/><rect x="441" y="0" width="2" height="8" fill="#929292"/><rect x="449" y="4" width="2" height="4" fill="#7a7a7a"/><rect x="457" y="4" width="2" height="4" fill="#7a7a7a"/><rect x="465" y="4" width="2" height="4" fill="#7a7a7a"/><rect x="473" y="4" width="2" height="4" fill="#7a7a7a"/><rect x="481" y="0" width="2" height="8" fill="#929292"/><rect x="489" y="4" width="2" height="4" fill="#7a7a7a"/><rect x="497" y="4" width="2" height="4" fill="#7a7a7a"/><rect x="505" y="4" width="2" height="4" fill="#7a7a7a"/><rect x="513" y="4" width="2" height="4" fill="#7a7a7a"/><rect x="521" y="0" width="2" height="8" fill="#929292"/><rect x="529" y="4" width="2" height="4" fill="#7a7a7a"/><rect x="537" y="4" width="2" height="4" fill="#7a7a7a"/><rect x="545" y="4" width="2" height="4" fill="#7a7a7a"/><rect x="553" y="4" width="2" height="4" fill="#7a7a7a"/><rect x="561" y="0" width="2" height="8" fill="#929292"/><rect x="569" y="4" width="2" height="4" fill="#7a7a7a"/><rect x="577" y="4" width="2" height="4" fill="#7a7a7a"/><rect x="585" y="4" width="2" height="4" fill="#7a7a7a"/></svg>
<div style="left:1580px;top:1528px;width:362px;height:64px;background:#2c2c2c;"></div>
<svg style="left:1600px;top:1528px;" width="30" height="64"><path d="M9 5 V64" stroke="#8c8c8c" stroke-width="2" stroke-dasharray="6 4" fill="none"/><path d="M10 36.5 H24" stroke="#8c8c8c" stroke-width="2" stroke-dasharray="4 4" fill="none"/></svg>
<svg style="left:1642px;top:1547px;" width="24" height="26" viewBox="0 0 24 26"><path d="M0 0 H24 V3.6 H13.8 V26 H10.2 V3.6 H0 Z" fill="#f0f0f0"/></svg>
<div style="top:1539.5px;height:41px;line-height:41px;font-size:26px;color:#ececec;white-space:nowrap;letter-spacing:1.77px;left:1683px;">Text</div>
<svg style="left:1897.7px;top:1547px;" width="24" height="26" viewBox="0 0 24 26"><path d="M0 0 H24 V3.6 H13.8 V26 H10.2 V3.6 H0 Z" fill="#f0f0f0"/></svg>
<div style="left:1953px;top:1554px;width:18px;height:18px;background:#555555;border-radius:50%;"></div>
<div style="left:1580px;top:1594px;width:362px;height:34px;background:#2c2c2c;"></div>
<svg style="left:1600px;top:1592px;" width="30" height="36"><path d="M9 5 V19.5" stroke="#8c8c8c" stroke-width="2" stroke-dasharray="6 4" fill="none"/><path d="M10 19.5 H24" stroke="#8c8c8c" stroke-width="2" stroke-dasharray="4 4" fill="none"/></svg>
<svg style="left:1646px;top:1603px;" width="16" height="16" viewBox="0 0 16 16"><path d="M8.0 0 V16 M0 8.0 H16" stroke="#f0f0f0" stroke-width="2.6" fill="none"/></svg>
<div style="left:1580px;top:1652px;width:362px;height:64px;background:#393939;"></div>
<svg style="left:1597px;top:1668px;" width="30" height="32" viewBox="0 0 30 32"><rect x="10" y="0" width="10" height="19" rx="5" fill="#f2f2f2"/><path d="M3 13 Q3 25 15 25 Q27 25 27 13" fill="none" stroke="#8f8f8f" stroke-width="3.2"/><path d="M15 25 V31" stroke="#8f8f8f" stroke-width="3.4"/></svg>
<div style="top:1662px;height:44px;line-height:44px;font-size:28px;color:#ececec;white-space:nowrap;letter-spacing:-0.47px;left:1638.5px;">Voice Command ...</div>
<svg style="left:1552.5px;top:1677px;" width="14" height="10" viewBox="0 0 14 10"><path d="M0 0 H14 L7 10 Z" fill="#8a8a8a"/></svg>
<div style="top:1672px;height:29px;line-height:29px;font-size:18.5px;color:#b9b9b9;white-space:nowrap;letter-spacing:0.3px;left:1562px;width:800px;text-align:center;">0</div>
<div style="top:1672px;height:29px;line-height:29px;font-size:18.5px;color:#b9b9b9;white-space:nowrap;letter-spacing:0.3px;left:1642px;width:800px;text-align:center;">0.2</div>
<div style="top:1672px;height:29px;line-height:29px;font-size:18.5px;color:#b9b9b9;white-space:nowrap;letter-spacing:0.3px;left:1722px;width:800px;text-align:center;">0.4</div>
<div style="top:1672px;height:29px;line-height:29px;font-size:18.5px;color:#b9b9b9;white-space:nowrap;letter-spacing:0.3px;left:1802px;width:800px;text-align:center;">0.6</div>
<div style="top:1672px;height:29px;line-height:29px;font-size:18.5px;color:#b9b9b9;white-space:nowrap;letter-spacing:0.3px;left:1882px;width:800px;text-align:center;">0.8</div>
<div style="top:1672px;height:29px;line-height:29px;font-size:18.5px;color:#b9b9b9;white-space:nowrap;letter-spacing:0.3px;left:1962px;width:800px;text-align:center;">1</div>
<div style="top:1672px;height:29px;line-height:29px;font-size:18.5px;color:#b9b9b9;white-space:nowrap;letter-spacing:0.3px;left:2042px;width:800px;text-align:center;">1.2</div>
<div style="top:1672px;height:29px;line-height:29px;font-size:18.5px;color:#b9b9b9;white-space:nowrap;letter-spacing:0.3px;left:2122px;width:800px;text-align:center;">1.4</div>
<svg style="left:1960px;top:1706px;" width="590" height="8"><rect x="1" y="0" width="2" height="8" fill="#929292"/><rect x="9" y="4" width="2" height="4" fill="#7a7a7a"/><rect x="17" y="4" width="2" height="4" fill="#7a7a7a"/><rect x="25" y="4" width="2" height="4" fill="#7a7a7a"/><rect x="33" y="4" width="2" height="4" fill="#7a7a7a"/><rect x="41" y="0" width="2" height="8" fill="#929292"/><rect x="49" y="4" width="2" height="4" fill="#7a7a7a"/><rect x="57" y="4" width="2" height="4" fill="#7a7a7a"/><rect x="65" y="4" width="2" height="4" fill="#7a7a7a"/><rect x="73" y="4" width="2" height="4" fill="#7a7a7a"/><rect x="81" y="0" width="2" height="8" fill="#929292"/><rect x="89" y="4" width="2" height="4" fill="#7a7a7a"/><rect x="97" y="4" width="2" height="4" fill="#7a7a7a"/><rect x="105" y="4" width="2" height="4" fill="#7a7a7a"/><rect x="113" y="4" width="2" height="4" fill="#7a7a7a"/><rect x="121" y="0" width="2" height="8" fill="#929292"/><rect x="129" y="4" width="2" height="4" fill="#7a7a7a"/><rect x="137" y="4" width="2" height="4" fill="#7a7a7a"/><rect x="145" y="4" width="2" height="4" fill="#7a7a7a"/><rect x="153" y="4" width="2" height="4" fill="#7a7a7a"/><rect x="161" y="0" width="2" height="8" fill="#929292"/><rect x="169" y="4" width="2" height="4" fill="#7a7a7a"/><rect x="177" y="4" width="2" height="4" fill="#7a7a7a"/><rect x="185" y="4" width="2" height="4" fill="#7a7a7a"/><rect x="193" y="4" width="2" height="4" fill="#7a7a7a"/><rect x="201" y="0" width="2" height="8" fill="#929292"/><rect x="209" y="4" width="2" height="4" fill="#7a7a7a"/><rect x="217" y="4" width="2" height="4" fill="#7a7a7a"/><rect x="225" y="4" width="2" height="4" fill="#7a7a7a"/><rect x="233" y="4" width="2" height="4" fill="#7a7a7a"/><rect x="241" y="0" width="2" height="8" fill="#929292"/><rect x="249" y="4" width="2" height="4" fill="#7a7a7a"/><rect x="257" y="4" width="2" height="4" fill="#7a7a7a"/><rect x="265" y="4" width="2" height="4" fill="#7a7a7a"/><rect x="273" y="4" width="2" height="4" fill="#7a7a7a"/><rect x="281" y="0" width="2" height="8" fill="#929292"/><rect x="289" y="4" width="2" height="4" fill="#7a7a7a"/><rect x="297" y="4" width="2" height="4" fill="#7a7a7a"/><rect x="305" y="4" width="2" height="4" fill="#7a7a7a"/><rect x="313" y="4" width="2" height="4" fill="#7a7a7a"/><rect x="321" y="0" width="2" height="8" fill="#929292"/><rect x="329" y="4" width="2" height="4" fill="#7a7a7a"/><rect x="337" y="4" width="2" height="4" fill="#7a7a7a"/><rect x="345" y="4" width="2" height="4" fill="#7a7a7a"/><rect x="353" y="4" width="2" height="4" fill="#7a7a7a"/><rect x="361" y="0" width="2" height="8" fill="#929292"/><rect x="369" y="4" width="2" height="4" fill="#7a7a7a"/><rect x="377" y="4" width="2" height="4" fill="#7a7a7a"/><rect x="385" y="4" width="2" height="4" fill="#7a7a7a"/><rect x="393" y="4" width="2" height="4" fill="#7a7a7a"/><rect x="401" y="0" width="2" height="8" fill="#929292"/><rect x="409" y="4" width="2" height="4" fill="#7a7a7a"/><rect x="417" y="4" width="2" height="4" fill="#7a7a7a"/><rect x="425" y="4" width="2" height="4" fill="#7a7a7a"/><rect x="433" y="4" width="2" height="4" fill="#7a7a7a"/><rect x="441" y="0" width="2" height="8" fill="#929292"/><rect x="449" y="4" width="2" height="4" fill="#7a7a7a"/><rect x="457" y="4" width="2" height="4" fill="#7a7a7a"/><rect x="465" y="4" width="2" height="4" fill="#7a7a7a"/><rect x="473" y="4" width="2" height="4" fill="#7a7a7a"/><rect x="481" y="0" width="2" height="8" fill="#929292"/><rect x="489" y="4" width="2" height="4" fill="#7a7a7a"/><rect x="497" y="4" width="2" height="4" fill="#7a7a7a"/><rect x="505" y="4" width="2" height="4" fill="#7a7a7a"/><rect x="513" y="4" width="2" height="4" fill="#7a7a7a"/><rect x="521" y="0" width="2" height="8" fill="#929292"/><rect x="529" y="4" width="2" height="4" fill="#7a7a7a"/><rect x="537" y="4" width="2" height="4" fill="#7a7a7a"/><rect x="545" y="4" width="2" height="4" fill="#7a7a7a"/><rect x="553" y="4" width="2" height="4" fill="#7a7a7a"/><rect x="561" y="0" width="2" height="8" fill="#929292"/><rect x="569" y="4" width="2" height="4" fill="#7a7a7a"/><rect x="577" y="4" width="2" height="4" fill="#7a7a7a"/><rect x="585" y="4" width="2" height="4" fill="#7a7a7a"/></svg>
<div style="left:1580px;top:1718px;width:362px;height:64px;background:#2c2c2c;"></div>
<svg style="left:1600px;top:1718px;" width="30" height="64"><path d="M9 5 V64" stroke="#8c8c8c" stroke-width="2" stroke-dasharray="6 4" fill="none"/><path d="M10 36.5 H24" stroke="#8c8c8c" stroke-width="2" stroke-dasharray="4 4" fill="none"/></svg>
<svg style="left:1642px;top:1737px;" width="24" height="26" viewBox="0 0 24 26"><path d="M0 0 H24 V3.6 H13.8 V26 H10.2 V3.6 H0 Z" fill="#f0f0f0"/></svg>
<div style="top:1729.5px;height:41px;line-height:41px;font-size:26px;color:#ececec;white-space:nowrap;letter-spacing:1.77px;left:1683px;">Text</div>
<svg style="left:1897.7px;top:1737px;" width="24" height="26" viewBox="0 0 24 26"><path d="M0 0 H24 V3.6 H13.8 V26 H10.2 V3.6 H0 Z" fill="#f0f0f0"/></svg>
<div style="left:1953px;top:1744px;width:18px;height:18px;background:#555555;border-radius:50%;"></div>
<div style="left:1580px;top:1784px;width:362px;height:64px;background:#2c2c2c;"></div>
<svg style="left:1600px;top:1784px;" width="30" height="64"><path d="M9 5 V64" stroke="#8c8c8c" stroke-width="2" stroke-dasharray="6 4" fill="none"/><path d="M10 36.5 H24" stroke="#8c8c8c" stroke-width="2" stroke-dasharray="4 4" fill="none"/></svg>
<svg style="left:1639px;top:1800px;" width="30" height="32" viewBox="0 0 30 32"><rect x="10" y="0" width="10" height="19" rx="5" fill="#f2f2f2"/><path d="M3 13 Q3 25 15 25 Q27 25 27 13" fill="none" stroke="#8f8f8f" stroke-width="3.2"/><path d="M15 25 V31" stroke="#8f8f8f" stroke-width="3.4"/></svg>
<div style="top:1795.5px;height:41px;line-height:41px;font-size:26px;color:#ececec;white-space:nowrap;letter-spacing:0.82px;left:1683px;">Listen</div>
<div style="left:1953px;top:1810px;width:18px;height:18px;background:#555555;border-radius:50%;"></div>
<!-- s5_right -->
<div style="left:2554px;top:260px;width:438px;height:1566px;background:#1f1f1f;"></div>
<div style="left:2554px;top:260px;width:2px;height:1566px;background:#181818;"></div>
<div style="left:2572px;top:276px;width:404px;height:148px;background:#2b2b2b;border-radius:8px;"></div>
<svg style="left:2592.5px;top:305px;" width="26" height="26" viewBox="0 0 26 26"><path d="M4 22 L22 4" stroke="#f0f0f0" stroke-width="3.2" fill="none"/><path d="M12.5 1 H25 V13.5 Z" fill="#f0f0f0"/><path d="M1 12.5 V25 H13.5 Z" fill="#f0f0f0"/></svg>
<div style="top:295.5px;height:44px;line-height:44px;font-size:28px;color:#f2f2f2;white-space:nowrap;letter-spacing:1.49px;left:2639px;">Scale</div>
<div style="left:2913.7px;top:299.8px;width:48px;height:28.4px;background:#8470f2;border-radius:15px;"></div>
<div style="left:2937.6px;top:304px;width:20.4px;height:20.4px;background:#ffffff;border-radius:50%;"></div>
<div style="left:2590.5px;top:350.5px;width:374px;height:55px;background:#000;border-radius:4px;"></div>
<div style="left:2616.2px;top:366.4px;width:24px;height:24px;background:#f0f0f0;"></div>
<div style="top:357.5px;height:41px;line-height:41px;font-size:26px;color:#f4f4f4;white-space:nowrap;letter-spacing:0.6px;left:2652.5px;">red</div>
<svg style="left:2935px;top:373.5px;" width="14" height="10" viewBox="0 0 14 10"><path d="M0 0 H14 L7 10 Z" fill="#f4f4f4"/></svg>
<div style="top:471.5px;height:40px;line-height:40px;font-size:25px;color:#d8d8d8;white-space:nowrap;letter-spacing:0.09px;left:2570.5px;">Scale by</div>
<div style="left:2686.3px;top:468.3px;width:285.3px;height:51px;background:#000;border-radius:5px;"></div>
<div style="left:2689.7px;top:471.7px;width:140.3px;height:44.2px;background:#2c2c2c;border-radius:3px;"></div>
<div style="top:476.5px;height:35px;line-height:35px;font-size:22.19px;color:#ffffff;white-space:nowrap;font-weight:700;left:2360px;width:800px;text-align:center;">Size</div>
<div style="top:475.5px;height:37px;line-height:37px;font-size:23.29px;color:#b4b4b4;white-space:nowrap;left:2498.7px;width:800px;text-align:center;">Factor</div>
<div style="top:563.5px;height:40px;line-height:40px;font-size:25px;color:#d8d8d8;white-space:nowrap;letter-spacing:0.23px;left:2570.5px;">Smoothness</div>
<div style="left:2720px;top:560.5px;width:251.6px;height:50.5px;background:#000;border-radius:5px;"></div>
<div style="left:2803.8px;top:564px;width:84.2px;height:44px;background:#2c2c2c;border-radius:3px;"></div>
<svg style="left:2748px;top:575px;" width="30" height="14" viewBox="0 0 30 14"><path d="M1 12 Q8 11 13.5 5.5 Q15 4 16.5 5.5 Q22 11 29 12" fill="none" stroke="#8c8c8c" stroke-width="2.4"/></svg>
<svg style="left:2830.6px;top:575px;" width="30" height="14" viewBox="0 0 30 14"><path d="M0 12 H6 Q9 12 10.5 8 Q12 4.5 15 4.5 Q18 4.5 19.5 8 Q21 12 24 12 H30" fill="none" stroke="#ffffff" stroke-width="3"/></svg>
<svg style="left:2912.4px;top:575px;" width="30" height="14" viewBox="0 0 30 14"><path d="M0 12 H9 V4.5 H21 V12 H30" fill="none" stroke="#8c8c8c" stroke-width="2.4"/></svg>
<div style="top:655.5px;height:40px;line-height:40px;font-size:25px;color:#d8d8d8;white-space:nowrap;letter-spacing:0.43px;left:2570.5px;">Mapping</div>
<div style="left:2570px;top:709px;width:402px;height:84px;background:#2b2b2b;border-radius:6px;"></div>
<div style="top:723px;height:32px;line-height:32px;font-size:20px;color:#d4d4d4;white-space:nowrap;letter-spacing:0.5px;left:2262px;width:800px;text-align:center;">dB of</div>
<div style="top:746.7px;height:32px;line-height:32px;font-size:20px;color:#d4d4d4;white-space:nowrap;letter-spacing:0.5px;left:2262px;width:800px;text-align:center;">Sound</div>
<div style="top:723px;height:32px;line-height:32px;font-size:20px;color:#d4d4d4;white-space:nowrap;letter-spacing:0.5px;left:2470px;width:800px;text-align:center;">Size of</div>
<div style="top:746.7px;height:32px;line-height:32px;font-size:20px;color:#d4d4d4;white-space:nowrap;letter-spacing:0.5px;left:2470px;width:800px;text-align:center;">red</div>
<svg style="left:2762px;top:744px;" width="20" height="12" viewBox="0 0 20 12"><g fill="none" stroke="#7c7c7c" stroke-width="2"><path d="M7 1.5 H5.5 Q1 1.5 1 6 Q1 10.5 5.5 10.5 H7"/><path d="M13 1.5 H14.5 Q19 1.5 19 6 Q19 10.5 14.5 10.5 H13"/><path d="M6.5 6 H13.5"/></g></svg>
<div style="left:2570px;top:813.5px;width:402px;height:211px;background:#2b2b2b;border-radius:2px;"></div>
<div style="top:827px;height:32px;line-height:32px;font-size:20px;color:#a8a8a8;white-space:nowrap;letter-spacing:-0.1px;left:2586.5px;">Range<span style="color:#fff">1</span></div>
<svg style="left:2941.5px;top:836.5px;" width="14" height="14" viewBox="0 0 14 14"><path d="M1 1 L13 13 M13 1 L1 13" stroke="#9a9a9a" stroke-width="1.8" fill="none"/></svg>
<svg style="left:2585.5px;top:896.5px;" width="10" height="64" viewBox="0 0 10 64"><path d="M9 1 H1 V62 H9" fill="none" stroke="#777" stroke-width="2"/></svg>
<div style="left:2600px;top:871.0px;width:156px;height:52px;background:#000;border-radius:4px;"></div>
<div style="left:2794px;top:871.0px;width:78px;height:52px;background:#000;border-radius:4px;"></div>
<div style="left:2880px;top:871.0px;width:76px;height:52px;background:#000;border-radius:4px;"></div>
<div style="top:877px;height:40px;line-height:40px;font-size:25.5px;color:#f4f4f4;white-space:nowrap;letter-spacing:1.2px;left:2612.5px;">50</div>
<div style="top:877px;height:40px;line-height:40px;font-size:25.5px;color:#f4f4f4;white-space:nowrap;letter-spacing:1.2px;left:2892.5px;">20</div>
<svg style="left:2765px;top:890px;" width="20" height="12" viewBox="0 0 20 12"><g fill="none" stroke="#8f8f8f" stroke-width="2"><path d="M7 1.5 H5.5 Q1 1.5 1 6 Q1 10.5 5.5 10.5 H7"/><path d="M13 1.5 H14.5 Q19 1.5 19 6 Q19 10.5 14.5 10.5 H13"/><path d="M6.5 6 H13.5"/></g></svg>
<div style="left:2600px;top:931.0px;width:156px;height:52px;background:#000;border-radius:4px;"></div>
<div style="left:2794px;top:931.0px;width:78px;height:52px;background:#000;border-radius:4px;"></div>
<div style="left:2880px;top:931.0px;width:76px;height:52px;background:#000;border-radius:4px;"></div>
<div style="top:937px;height:40px;line-height:40px;font-size:25.5px;color:#f4f4f4;white-space:nowrap;letter-spacing:1.2px;left:2612.5px;">70</div>
<div style="top:937px;height:40px;line-height:40px;font-size:25.5px;color:#f4f4f4;white-space:nowrap;letter-spacing:0.4px;left:2892.5px;">160</div>
<svg style="left:2765px;top:950px;" width="20" height="12" viewBox="0 0 20 12"><g fill="none" stroke="#8f8f8f" stroke-width="2"><path d="M7 1.5 H5.5 Q1 1.5 1 6 Q1 10.5 5.5 10.5 H7"/><path d="M13 1.5 H14.5 Q19 1.5 19 6 Q19 10.5 14.5 10.5 H13"/><path d="M6.5 6 H13.5"/></g></svg>
<div style="top:985px;height:32px;line-height:32px;font-size:20px;color:#9c9c9c;white-space:nowrap;letter-spacing:0.5px;left:2278.5px;width:800px;text-align:center;">dB</div>
<div style="top:985px;height:32px;line-height:32px;font-size:20px;color:#9c9c9c;white-space:nowrap;letter-spacing:0.5px;left:2434px;width:800px;text-align:center;">Width</div>
<div style="top:985px;height:32px;line-height:32px;font-size:20px;color:#9c9c9c;white-space:nowrap;letter-spacing:0.5px;left:2519px;width:800px;text-align:center;">Height</div>
<div style="left:2570px;top:1031px;width:402px;height:211px;background:#2b2b2b;border-radius:2px;"></div>
<div style="top:1044.5px;height:32px;line-height:32px;font-size:20px;color:#a8a8a8;white-space:nowrap;letter-spacing:-0.1px;left:2586.5px;">Range<span style="color:#fff">2</span></div>
<svg style="left:2941.5px;top:1054px;" width="14" height="14" viewBox="0 0 14 14"><path d="M1 1 L13 13 M13 1 L1 13" stroke="#9a9a9a" stroke-width="1.8" fill="none"/></svg>
<svg style="left:2585.5px;top:1114px;" width="10" height="64" viewBox="0 0 10 64"><path d="M9 1 H1 V62 H9" fill="none" stroke="#777" stroke-width="2"/></svg>
<div style="left:2600px;top:1088.5px;width:156px;height:52px;background:#000;border-radius:4px;"></div>
<div style="left:2794px;top:1088.5px;width:78px;height:52px;background:#000;border-radius:4px;"></div>
<div style="left:2880px;top:1088.5px;width:76px;height:52px;background:#000;border-radius:4px;"></div>
<div style="top:1094.5px;height:40px;line-height:40px;font-size:25.5px;color:#f4f4f4;white-space:nowrap;letter-spacing:1.2px;left:2612.5px;">70</div>
<div style="top:1094.5px;height:40px;line-height:40px;font-size:25.5px;color:#f4f4f4;white-space:nowrap;letter-spacing:0.4px;left:2892.5px;">160</div>
<svg style="left:2765px;top:1107.5px;" width="20" height="12" viewBox="0 0 20 12"><g fill="none" stroke="#8f8f8f" stroke-width="2"><path d="M7 1.5 H5.5 Q1 1.5 1 6 Q1 10.5 5.5 10.5 H7"/><path d="M13 1.5 H14.5 Q19 1.5 19 6 Q19 10.5 14.5 10.5 H13"/><path d="M6.5 6 H13.5"/></g></svg>
<div style="left:2600px;top:1148.5px;width:156px;height:52px;background:#000;border-radius:4px;"></div>
<div style="left:2794px;top:1148.5px;width:78px;height:52px;background:#000;border-radius:4px;"></div>
<div style="left:2880px;top:1148.5px;width:76px;height:52px;background:#000;border-radius:4px;"></div>
<div style="top:1154.5px;height:40px;line-height:40px;font-size:25.5px;color:#f4f4f4;white-space:nowrap;letter-spacing:1.2px;left:2612.5px;">90</div>
<div style="top:1154.5px;height:40px;line-height:40px;font-size:25.5px;color:#f4f4f4;white-space:nowrap;letter-spacing:1.2px;left:2892.5px;">20</div>
<svg style="left:2765px;top:1167.5px;" width="20" height="12" viewBox="0 0 20 12"><g fill="none" stroke="#8f8f8f" stroke-width="2"><path d="M7 1.5 H5.5 Q1 1.5 1 6 Q1 10.5 5.5 10.5 H7"/><path d="M13 1.5 H14.5 Q19 1.5 19 6 Q19 10.5 14.5 10.5 H13"/><path d="M6.5 6 H13.5"/></g></svg>
<div style="top:1202.5px;height:32px;line-height:32px;font-size:20px;color:#9c9c9c;white-space:nowrap;letter-spacing:0.5px;left:2278.5px;width:800px;text-align:center;">dB</div>
<div style="top:1202.5px;height:32px;line-height:32px;font-size:20px;color:#9c9c9c;white-space:nowrap;letter-spacing:0.5px;left:2434px;width:800px;text-align:center;">Width</div>
<div style="top:1202.5px;height:32px;line-height:32px;font-size:20px;color:#9c9c9c;white-space:nowrap;letter-spacing:0.5px;left:2519px;width:800px;text-align:center;">Height</div>
<div style="left:2570px;top:1249.5px;width:402px;height:43.5px;background:#2b2b2b;border-radius:4px;"></div>
<svg style="left:2764.5px;top:1264.5px;" width="15" height="15" viewBox="0 0 15 15"><path d="M7.5 0 V15 M0 7.5 H15" stroke="#dcdcdc" stroke-width="2.4" fill="none"/></svg>

</div></div>
<div id="edge"></div>
</body></html>
